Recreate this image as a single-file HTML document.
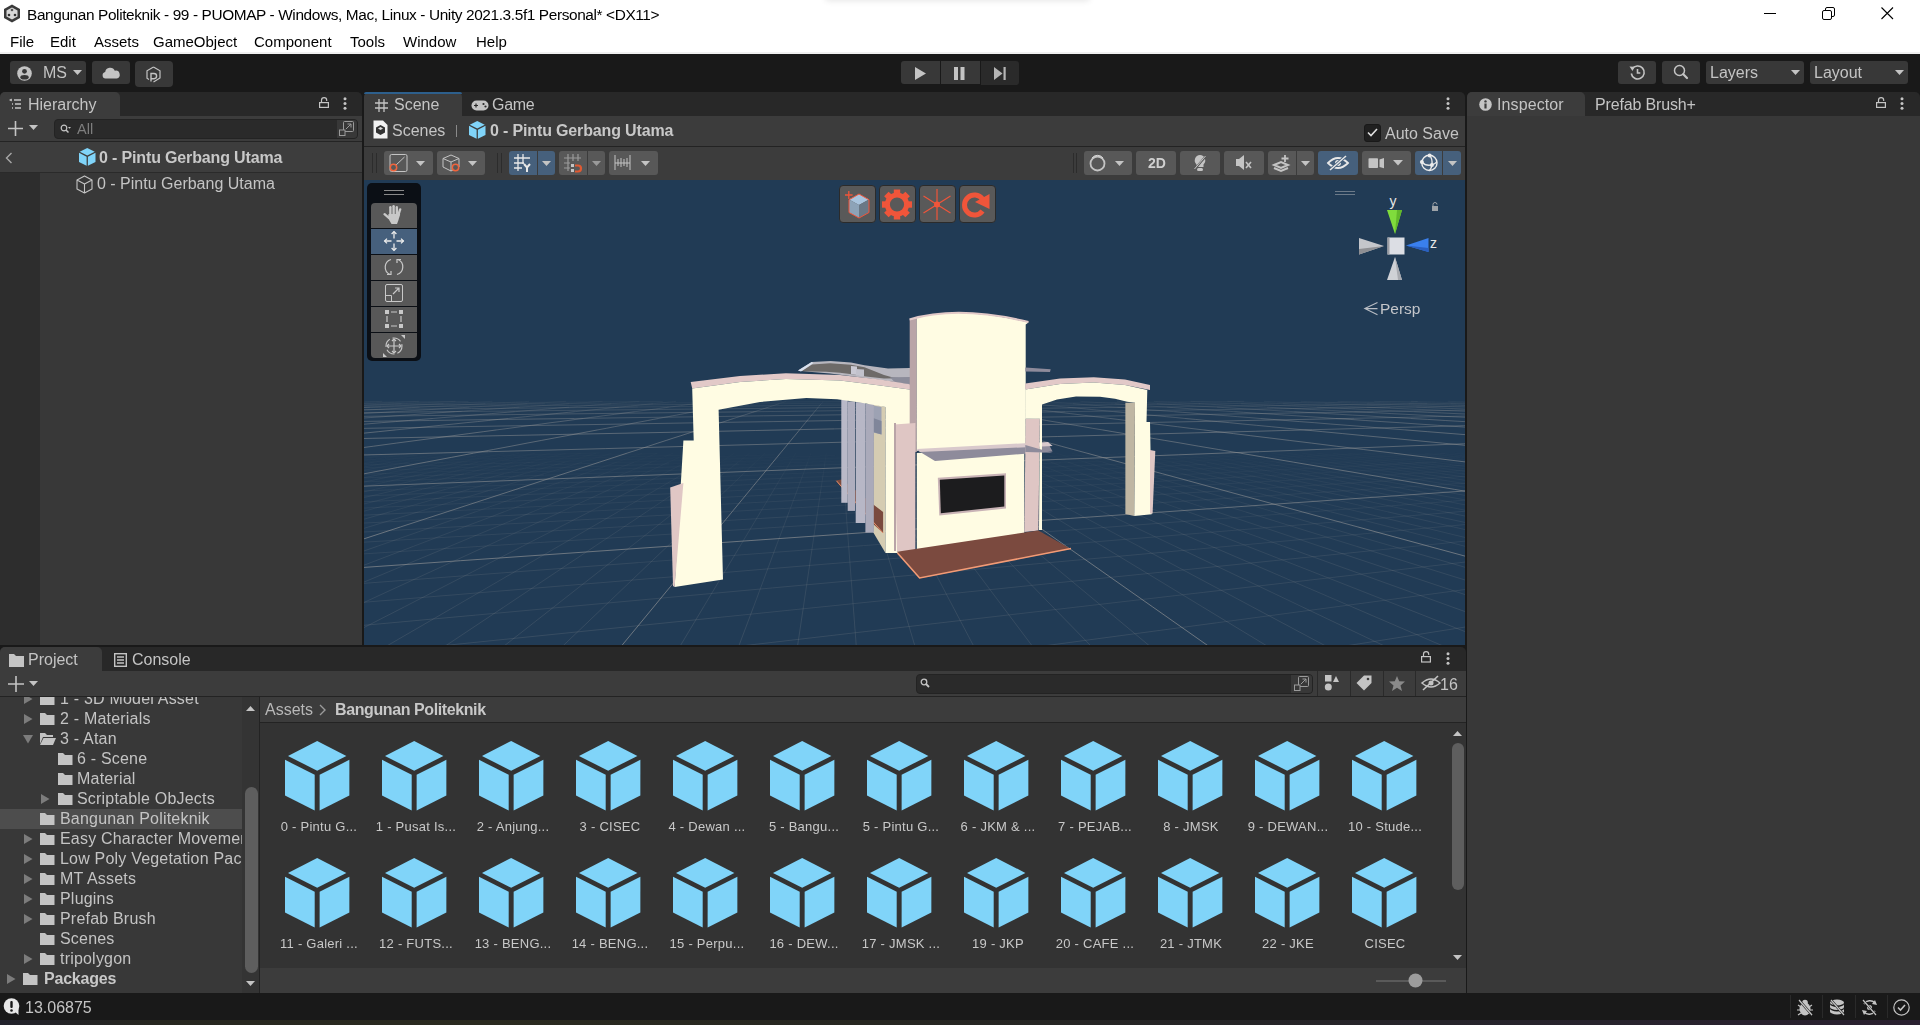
<!DOCTYPE html>
<html><head><meta charset="utf-8">
<style>
*{margin:0;padding:0;box-sizing:border-box}
html,body{width:1920px;height:1025px;overflow:hidden;background:#191919;font-family:"Liberation Sans",sans-serif;}
.a{position:absolute}
.t{position:absolute;white-space:nowrap;will-change:transform}
svg{position:absolute;overflow:visible}
.mj{stroke-opacity:0.55}
</style></head><body>

<div class="a" style="left:0.0px;top:0.0px;width:1920.0px;height:52.0px;background:#ffffff;"></div>
<div class="a" style="left:0.0px;top:52.0px;width:1920.0px;height:2.0px;background:#f0f0f0;"></div>
<div class="a" style="left:825.0px;top:-8.0px;width:265.0px;height:8.0px;background:#fff;box-shadow:0 1px 6px rgba(0,0,0,0.10);border-radius:4px"></div>
<svg class="a" style="left:3.0px;top:4.0px;" width="18" height="19" viewBox="0 0 18 19"><polygon points="9,0.5 17,5 17,14 9,18.5 1,14 1,5" fill="#3a3a3a"/><polygon points="9,3.5 14.5,6.5 14.5,12.5 9,15.5 3.5,12.5 3.5,6.5" fill="#d8d8d8"/><circle cx="9" cy="6" r="1.3" fill="#555"/><circle cx="6" cy="11" r="1.3" fill="#333"/><circle cx="12" cy="11" r="1.3" fill="#333"/></svg>
<div class="t" style="left:27.0px;top:7.0px;font-size:15.40px;line-height:15.40px;color:#000;font-weight:400;letter-spacing:-0.38px;">Bangunan Politeknik - 99 - PUOMAP - Windows, Mac, Linux - Unity 2021.3.5f1 Personal* &lt;DX11&gt;</div>
<div class="t" style="left:9.5px;top:34.3px;font-size:15.00px;line-height:15.00px;color:#000;font-weight:400;letter-spacing:0.00px;">File</div>
<div class="t" style="left:50.0px;top:34.3px;font-size:15.00px;line-height:15.00px;color:#000;font-weight:400;letter-spacing:0.00px;">Edit</div>
<div class="t" style="left:94.0px;top:34.3px;font-size:15.00px;line-height:15.00px;color:#000;font-weight:400;letter-spacing:0.00px;">Assets</div>
<div class="t" style="left:153.0px;top:34.3px;font-size:15.00px;line-height:15.00px;color:#000;font-weight:400;letter-spacing:0.00px;">GameObject</div>
<div class="t" style="left:254.0px;top:34.3px;font-size:15.00px;line-height:15.00px;color:#000;font-weight:400;letter-spacing:0.00px;">Component</div>
<div class="t" style="left:350.0px;top:34.3px;font-size:15.00px;line-height:15.00px;color:#000;font-weight:400;letter-spacing:0.00px;">Tools</div>
<div class="t" style="left:403.0px;top:34.3px;font-size:15.00px;line-height:15.00px;color:#000;font-weight:400;letter-spacing:0.00px;">Window</div>
<div class="t" style="left:476.0px;top:34.3px;font-size:15.00px;line-height:15.00px;color:#000;font-weight:400;letter-spacing:0.00px;">Help</div>
<div class="a" style="left:1764.0px;top:13.0px;width:12.0px;height:1.0px;background:#000;"></div>
<svg class="a" style="left:1822.0px;top:7.0px;" width="14" height="14" viewBox="0 0 14 14"><rect x="0.5" y="3.5" width="9" height="9" rx="1.5" fill="none" stroke="#000" stroke-width="1"/><path d="M3.5,3.5 V2 a1.5,1.5 0 0 1 1.5,-1.5 H11 a1.5,1.5 0 0 1 1.5,1.5 V8 a1.5,1.5 0 0 1 -1.5,1.5 H9.5" fill="none" stroke="#000" stroke-width="1"/></svg>
<svg class="a" style="left:1881.0px;top:7.0px;" width="13" height="13" viewBox="0 0 13 13"><path d="M0.5,0.5 L12,12 M12,0.5 L0.5,12" stroke="#000" stroke-width="1.1"/></svg>
<div class="a" style="left:10.0px;top:61.0px;width:76.0px;height:23.0px;background:#383838;border-radius:3px"></div>
<svg class="a" style="left:17.0px;top:66.0px;" width="15" height="15" viewBox="0 0 15 15"><circle cx="7.5" cy="7.5" r="7.3" fill="#c4c4c4"/><circle cx="7.5" cy="5.3" r="2.4" fill="#383838"/><ellipse cx="7.5" cy="11.2" rx="4.2" ry="2.3" fill="#383838"/></svg>
<div class="t" style="left:42.5px;top:65.1px;font-size:16.00px;line-height:16.00px;color:#c4c4c4;font-weight:400;letter-spacing:0.00px;">MS</div>
<svg class="a" style="left:73.0px;top:70.0px;" width="9" height="5" viewBox="0 0 9 5"><polygon points="0,0 9.0,0 4.5,5.0" fill="#c4c4c4"/></svg>
<div class="a" style="left:92.0px;top:61.0px;width:38.0px;height:23.0px;background:#383838;border-radius:3px"></div>
<svg class="a" style="left:102.0px;top:67.0px;" width="18" height="12" viewBox="0 0 18 12"><path d="M3.5,11.5 a3.3,3.3 0 0 1 -0.3,-6.5 a5,5 0 0 1 9.6,-1.2 a3.5,3.5 0 0 1 1.9,7.7 z" fill="#c4c4c4"/></svg>
<div class="a" style="left:135.0px;top:61.0px;width:38.0px;height:26.0px;background:#383838;border-radius:4px"></div>
<svg class="a" style="left:145.0px;top:66.0px;" width="17" height="17" viewBox="0 0 17 17"><path d="M8.5,1 L15,4.8 V12 L8.5,16 M8.5,1 L2,4.8 V12.2 L4,13.5" fill="none" stroke="#c4c4c4" stroke-width="1.2"/><path d="M6,15.5 V7.5 h3 a2.6,2.6 0 0 1 0,5.2 H6" fill="none" stroke="#c4c4c4" stroke-width="1.4"/></svg>
<div class="a" style="left:901.0px;top:61.0px;width:39.0px;height:23.0px;background:#383838;border-radius:3px 0 0 3px"></div>
<div class="a" style="left:941.0px;top:61.0px;width:39.0px;height:23.0px;background:#383838;"></div>
<div class="a" style="left:981.0px;top:61.0px;width:38.0px;height:24.0px;background:#2a2a2a;border-radius:0 3px 3px 0"></div>
<svg class="a" style="left:915.0px;top:67.0px;" width="11" height="13" viewBox="0 0 11 13"><polygon points="0,0 11,6.5 0,13" fill="#c4c4c4"/></svg>
<svg class="a" style="left:954.0px;top:67.0px;" width="11" height="13" viewBox="0 0 11 13"><rect x="0" y="0" width="4" height="13" fill="#c4c4c4"/><rect x="6.5" y="0" width="4" height="13" fill="#c4c4c4"/></svg>
<svg class="a" style="left:994.0px;top:67.0px;" width="12" height="13" viewBox="0 0 12 13"><polygon points="0,0 8.5,6.5 0,13" fill="#b4b4b4"/><rect x="9.5" y="0" width="2.2" height="13" fill="#b4b4b4"/></svg>
<div class="a" style="left:1618.0px;top:61.0px;width:38.0px;height:23.0px;background:#383838;border-radius:3px"></div>
<svg class="a" style="left:1629.0px;top:64.0px;" width="17" height="17" viewBox="0 0 17 17"><path d="M3.2,5 A6.5,6.5 0 1 1 2.3,9.5" fill="none" stroke="#c4c4c4" stroke-width="1.6"/><polygon points="0.5,2.5 5.5,2.8 3.5,7" fill="#c4c4c4"/><path d="M8.5,5 V9 H11.3" fill="none" stroke="#c4c4c4" stroke-width="1.6"/></svg>
<div class="a" style="left:1662.0px;top:61.0px;width:38.0px;height:23.0px;background:#383838;border-radius:3px"></div>
<svg class="a" style="left:1673.0px;top:64.0px;" width="16" height="16" viewBox="0 0 16 16"><circle cx="6.5" cy="6.5" r="5" fill="none" stroke="#c4c4c4" stroke-width="1.5"/><path d="M10.3,10.3 L14,14" stroke="#c4c4c4" stroke-width="2.2" stroke-linecap="round"/></svg>
<div class="a" style="left:1706.0px;top:61.0px;width:98.0px;height:23.0px;background:#383838;border-radius:3px"></div>
<div class="t" style="left:1710.0px;top:65.0px;font-size:16.00px;line-height:16.00px;color:#c4c4c4;font-weight:400;letter-spacing:0.00px;">Layers</div>
<svg class="a" style="left:1790.5px;top:70.0px;" width="9" height="5" viewBox="0 0 9 5"><polygon points="0,0 9.0,0 4.5,5.0" fill="#c4c4c4"/></svg>
<div class="a" style="left:1810.0px;top:61.0px;width:98.0px;height:23.0px;background:#383838;border-radius:3px"></div>
<div class="t" style="left:1814.0px;top:65.0px;font-size:16.00px;line-height:16.00px;color:#c4c4c4;font-weight:400;letter-spacing:0.00px;">Layout</div>
<svg class="a" style="left:1894.5px;top:70.0px;" width="9" height="5" viewBox="0 0 9 5"><polygon points="0,0 9.0,0 4.5,5.0" fill="#c4c4c4"/></svg>
<div class="a" style="left:0.0px;top:92.0px;width:362.0px;height:24.0px;background:#282828;border-radius:5px 5px 0 0"></div>
<div class="a" style="left:0.0px;top:92.0px;width:120.0px;height:25.0px;background:#3c3c3c;border-radius:5px 5px 0 0"></div>
<div class="a" style="left:0.0px;top:116.0px;width:362.0px;height:25.0px;background:#3c3c3c;"></div>
<div class="a" style="left:0.0px;top:141.0px;width:362.0px;height:1.0px;background:#242424;"></div>
<div class="a" style="left:0.0px;top:142.0px;width:362.0px;height:30.0px;background:#3d3d3d;"></div>
<div class="a" style="left:0.0px;top:172.0px;width:362.0px;height:1.0px;background:#2a2a2a;"></div>
<div class="a" style="left:0.0px;top:173.0px;width:362.0px;height:472.0px;background:#383838;"></div>
<div class="a" style="left:0.0px;top:173.0px;width:40.0px;height:472.0px;background:#2d2d2d;"></div>
<svg class="a" style="left:9.0px;top:99.0px;" width="14" height="11" viewBox="0 0 14 11"><path d="M2,1 h1 M5,1 H12 M3,5 h1 M6,5 H12 M3,9 h1 M6,9 H12" stroke="#c4c4c4" stroke-width="1.3"/><polygon points="0,1 2.5,-0.5 2.5,2.5" fill="#c4c4c4"/></svg>
<div class="t" style="left:27.5px;top:96.5px;font-size:16.00px;line-height:16.00px;color:#c4c4c4;font-weight:400;letter-spacing:0.00px;">Hierarchy</div>
<svg class="a" style="left:319.0px;top:97.0px;" width="10" height="11" viewBox="0 0 10 11"><path d="M2.5,5 V3.2 a2.6,2.6 0 0 1 5.2,0 V4" fill="none" stroke="#c4c4c4" stroke-width="1.2"/><rect x="0.6" y="5.6" width="8.8" height="4.8" fill="none" stroke="#c4c4c4" stroke-width="1.2"/></svg>
<svg class="a" style="left:343.0px;top:97.0px;" width="4" height="13" viewBox="0 0 4 13"><circle cx="2" cy="1.8" r="1.5" fill="#c4c4c4"/><circle cx="2" cy="6.5" r="1.5" fill="#c4c4c4"/><circle cx="2" cy="11.2" r="1.5" fill="#c4c4c4"/></svg>
<svg class="a" style="left:8.0px;top:121.0px;" width="15" height="15" viewBox="0 0 15 15"><path d="M7.5,0 V15 M0,7.5 H15" stroke="#c4c4c4" stroke-width="1.6"/></svg>
<svg class="a" style="left:29.0px;top:125.0px;" width="9" height="5" viewBox="0 0 9 5"><polygon points="0,0 9.0,0 4.5,5.0" fill="#c4c4c4"/></svg>
<div class="a" style="left:54.0px;top:119.0px;width:304.0px;height:20.0px;background:#2a2a2a;border-radius:4px;border:1px solid #232323"></div>
<div class="a" style="left:337.0px;top:120.0px;width:20.0px;height:18.0px;background:#383838;border-radius:0 3px 3px 0"></div>
<svg class="a" style="left:60.0px;top:124.0px;" width="12" height="10" viewBox="0 0 12 10"><circle cx="4" cy="4" r="2.8" fill="none" stroke="#c4c4c4" stroke-width="1.2"/><path d="M6,6 L8.5,8.5" stroke="#c4c4c4" stroke-width="1.5"/><polygon points="8,3 11,3 9.5,4.8" fill="#c4c4c4"/></svg>
<div class="t" style="left:76.5px;top:121.7px;font-size:14.50px;line-height:14.50px;color:#7e7e7e;font-weight:400;letter-spacing:0.00px;">All</div>
<svg class="a" style="left:339.0px;top:121.0px;" width="15" height="15" viewBox="0 0 15 15"><rect x="4.5" y="0.5" width="10" height="10" rx="1" fill="none" stroke="#9a9a9a"/><rect x="0.5" y="9" width="5.5" height="5.5" fill="#383838" stroke="#9a9a9a"/><path d="M7,8 L12,3 M8.5,3 H12 V6.5" fill="none" stroke="#9a9a9a" stroke-width="1"/></svg>
<svg class="a" style="left:5.0px;top:152.0px;" width="8" height="12" viewBox="0 0 8 12"><path d="M6.5,1 L1.5,6 L6.5,11" fill="none" stroke="#a8a8a8" stroke-width="1.4"/></svg>
<svg class="a" style="left:79.0px;top:148.0px;" width="17" height="18" viewBox="0 0 17 18"><g transform="scale(0.2538)"><polygon points="32.5,0 62,15 32.5,30 3,15" fill="#80d4f9"/><polygon points="0,19 30,34 30,70 0,55" fill="#80d4f9"/><polygon points="35,34 65,19 65,55 35,70" fill="#80d4f9"/></g></svg>
<div class="t" style="left:99.0px;top:149.5px;font-size:16.00px;line-height:16.00px;color:#c8c8c8;font-weight:700;letter-spacing:-0.15px;">0 - Pintu Gerbang Utama</div>
<svg class="a" style="left:76.0px;top:175.0px;" width="17" height="19" viewBox="0 0 17 19"><path d="M8.5,1 L16,5 V14 L8.5,18 L1,14 V5 Z M1,5 L8.5,9 L16,5 M8.5,9 V18" fill="none" stroke="#c4c4c4" stroke-width="1.1" stroke-linejoin="round"/></svg>
<div class="t" style="left:96.8px;top:175.5px;font-size:16.00px;line-height:16.00px;color:#c4c4c4;font-weight:400;letter-spacing:0.00px;">0 - Pintu Gerbang Utama</div>
<div class="a" style="left:364.0px;top:92.0px;width:1101.0px;height:24.0px;background:#282828;border-radius:5px 5px 0 0"></div>
<div class="a" style="left:364.0px;top:92.0px;width:98.0px;height:25.0px;background:#3c3c3c;border-radius:5px 5px 0 0"></div>
<div class="a" style="left:364.0px;top:92.0px;width:98.0px;height:2.0px;background:#2d5f8c;border-radius:3px 3px 0 0"></div>
<svg class="a" style="left:375.0px;top:99.0px;" width="13" height="13" viewBox="0 0 13 13"><path d="M4,0 V13 M9,0 V13 M0,4 H13 M0,9 H13" stroke="#c4c4c4" stroke-width="1.3"/></svg>
<div class="t" style="left:393.8px;top:96.5px;font-size:16.00px;line-height:16.00px;color:#c4c4c4;font-weight:400;letter-spacing:0.00px;">Scene</div>
<svg class="a" style="left:471.0px;top:100.0px;" width="18" height="11" viewBox="0 0 18 11"><rect x="0.5" y="0.5" width="17" height="10" rx="5" fill="#c4c4c4"/><path d="M3,5.5 H7 M5,3.5 V7.5" stroke="#282828" stroke-width="1.2"/><circle cx="12.5" cy="4" r="1.1" fill="#282828"/><circle cx="14.5" cy="6.5" r="1.1" fill="#282828"/></svg>
<div class="t" style="left:492.0px;top:96.5px;font-size:16.00px;line-height:16.00px;color:#c4c4c4;font-weight:400;letter-spacing:-0.30px;">Game</div>
<svg class="a" style="left:1446.0px;top:97.0px;" width="4" height="13" viewBox="0 0 4 13"><circle cx="2" cy="1.8" r="1.5" fill="#c4c4c4"/><circle cx="2" cy="6.5" r="1.5" fill="#c4c4c4"/><circle cx="2" cy="11.2" r="1.5" fill="#c4c4c4"/></svg>
<div class="a" style="left:364.0px;top:116.0px;width:1101.0px;height:30.0px;background:#3c3c3c;"></div>
<div class="a" style="left:364.0px;top:146.0px;width:1101.0px;height:1.0px;background:#232323;"></div>
<div class="a" style="left:364.0px;top:147.0px;width:1101.0px;height:33.0px;background:#3c3c3c;"></div>
<svg class="a" style="left:373.0px;top:120.0px;" width="15" height="19" viewBox="0 0 15 19"><path d="M0.5,0.5 H10 L14.5,5 V18.5 H0.5 Z" fill="#f2f2f2"/><polygon points="7.5,5 12,7.5 12,12.5 7.5,15 3,12.5 3,7.5" fill="#333"/><polygon points="7.5,7 10,8.5 7.5,10 5,8.5" fill="#ddd"/></svg>
<div class="t" style="left:391.5px;top:122.5px;font-size:16.00px;line-height:16.00px;color:#c4c4c4;font-weight:400;letter-spacing:0.00px;">Scenes</div>
<div class="a" style="left:455.5px;top:125.0px;width:1.0px;height:12.0px;background:#8a8a8a;"></div>
<svg class="a" style="left:469.0px;top:121.0px;" width="17" height="18" viewBox="0 0 17 18"><g transform="scale(0.2538)"><polygon points="32.5,0 62,15 32.5,30 3,15" fill="#80d4f9"/><polygon points="0,19 30,34 30,70 0,55" fill="#80d4f9"/><polygon points="35,34 65,19 65,55 35,70" fill="#80d4f9"/></g></svg>
<div class="t" style="left:489.5px;top:122.5px;font-size:16.00px;line-height:16.00px;color:#c8c8c8;font-weight:700;letter-spacing:-0.15px;">0 - Pintu Gerbang Utama</div>
<div class="a" style="left:1364.0px;top:124.0px;width:17.0px;height:18.0px;background:#202020;border-radius:3px;border:1px solid #191919"></div>
<svg class="a" style="left:1367.0px;top:128.0px;" width="11" height="9" viewBox="0 0 11 9"><path d="M1,4.5 L4,7.5 L10,1" fill="none" stroke="#e0e0e0" stroke-width="1.6"/></svg>
<div class="t" style="left:1384.5px;top:125.8px;font-size:16.00px;line-height:16.00px;color:#c4c4c4;font-weight:400;letter-spacing:0.00px;">Auto Save</div>
<div class="a" style="left:372.0px;top:153.0px;width:1.0px;height:20.0px;background:#2c2c2c;"></div>
<div class="a" style="left:376.0px;top:153.0px;width:1.0px;height:20.0px;background:#2c2c2c;"></div>
<div class="a" style="left:384.0px;top:151.0px;width:49.0px;height:24.0px;background:#585858;border-radius:3px"></div>
<svg class="a" style="left:389.0px;top:154.0px;" width="19" height="18" viewBox="0 0 19 18"><rect x="1" y="0.5" width="17" height="17" rx="1.5" fill="none" stroke="#c4c4c4" stroke-width="1"/><path d="M6,12 L15.5,3" stroke="#c4c4c4" stroke-width="1"/><circle cx="4.5" cy="13.5" r="3.2" fill="#585858" stroke="#f0643c" stroke-width="1.5"/></svg>
<svg class="a" style="left:415.5px;top:160.5px;" width="9" height="5" viewBox="0 0 9 5"><polygon points="0,0 9.0,0 4.5,5.0" fill="#c4c4c4"/></svg>
<div class="a" style="left:437.0px;top:151.0px;width:48.0px;height:24.0px;background:#585858;border-radius:3px"></div>
<svg class="a" style="left:442.0px;top:154.0px;" width="19" height="18" viewBox="0 0 19 18"><path d="M9,1 L17,4.5 V13 L9,17 L1,13 V4.5 Z M1,4.5 L9,8 L17,4.5 M9,8 V17" fill="none" stroke="#c4c4c4" stroke-width="1"/><circle cx="13.5" cy="13.5" r="3.2" fill="#585858" stroke="#f0643c" stroke-width="1.5"/></svg>
<svg class="a" style="left:468.0px;top:160.5px;" width="9" height="5" viewBox="0 0 9 5"><polygon points="0,0 9.0,0 4.5,5.0" fill="#c4c4c4"/></svg>
<div class="a" style="left:497.0px;top:153.0px;width:1.0px;height:20.0px;background:#2c2c2c;"></div>
<div class="a" style="left:501.0px;top:153.0px;width:1.0px;height:20.0px;background:#2c2c2c;"></div>
<div class="a" style="left:509.0px;top:151.0px;width:28.0px;height:24.0px;background:#46607c;border-radius:3px 0 0 3px"></div>
<div class="a" style="left:538.0px;top:151.0px;width:17.0px;height:24.0px;background:#46607c;border-radius:0 3px 3px 0"></div>
<svg class="a" style="left:514.0px;top:154.0px;" width="18" height="18" viewBox="0 0 18 18"><path d="M4,0 V17 M9,0 V10 M0,4 H16 M0,9 H10 M0,14 H8" stroke="#e8e8e8" stroke-width="1.3"/><path d="M10,10 L13,13.5 L16,10 M13,13.5 V18" fill="none" stroke="#e8e8e8" stroke-width="2"/></svg>
<svg class="a" style="left:542.0px;top:160.5px;" width="9" height="5" viewBox="0 0 9 5"><polygon points="0,0 9.0,0 4.5,5.0" fill="#c4c4c4"/></svg>
<div class="a" style="left:559.0px;top:151.0px;width:28.0px;height:24.0px;background:#585858;border-radius:3px 0 0 3px"></div>
<div class="a" style="left:588.0px;top:151.0px;width:17.0px;height:24.0px;background:#585858;border-radius:0 3px 3px 0"></div>
<svg class="a" style="left:564.0px;top:154.0px;" width="18" height="18" viewBox="0 0 18 18"><path d="M4,0 V17 M9,0 V7 M14,0 V7 M0,4 H17 M0,9 H6 M0,14 H6" stroke="#9a9a9a" stroke-width="1.2"/><rect x="7" y="10" width="3" height="3" fill="#c4c4c4"/><rect x="7" y="15" width="3" height="3" fill="#c4c4c4"/><path d="M11,11.5 H14 a3,3 0 0 1 0,6 H11" fill="none" stroke="#e05a32" stroke-width="2.2"/></svg>
<svg class="a" style="left:592.0px;top:160.5px;" width="9" height="5" viewBox="0 0 9 5"><polygon points="0,0 9.0,0 4.5,5.0" fill="#9a9a9a"/></svg>
<div class="a" style="left:609.0px;top:151.0px;width:49.0px;height:24.0px;background:#585858;border-radius:3px"></div>
<svg class="a" style="left:614.0px;top:154.0px;" width="18" height="16" viewBox="0 0 18 16"><path d="M1,1 V16 M16,1 V16 M4,5 V12 M7,4 V13 M10,5 V12 M13,4 V13 M1,9 H16" stroke="#c4c4c4" stroke-width="1"/></svg>
<svg class="a" style="left:640.5px;top:160.5px;" width="9" height="5" viewBox="0 0 9 5"><polygon points="0,0 9.0,0 4.5,5.0" fill="#c4c4c4"/></svg>
<div class="a" style="left:1073.0px;top:153.0px;width:1.0px;height:20.0px;background:#2c2c2c;"></div>
<div class="a" style="left:1076.0px;top:153.0px;width:1.0px;height:20.0px;background:#2c2c2c;"></div>
<div class="a" style="left:1084.0px;top:151.0px;width:48.0px;height:24.0px;background:#585858;border-radius:3px"></div>
<svg class="a" style="left:1089.0px;top:155.0px;" width="17" height="17" viewBox="0 0 17 17"><circle cx="8.5" cy="8.5" r="7" fill="none" stroke="#c4c4c4" stroke-width="1.8"/><path d="M3,3 a7,7 0 0 1 11,0" fill="none" stroke="#d8d8d8" stroke-width="1"/></svg>
<svg class="a" style="left:1115.0px;top:160.5px;" width="9" height="5" viewBox="0 0 9 5"><polygon points="0,0 9.0,0 4.5,5.0" fill="#c4c4c4"/></svg>
<div class="a" style="left:1136.0px;top:151.0px;width:40.0px;height:24.0px;background:#585858;border-radius:3px"></div>
<div class="t" style="left:1147.5px;top:155.9px;font-size:14.00px;line-height:14.00px;color:#d0d0d0;font-weight:700;letter-spacing:0.00px;">2D</div>
<div class="a" style="left:1180.0px;top:151.0px;width:40.0px;height:24.0px;background:#585858;border-radius:3px"></div>
<svg class="a" style="left:1193.0px;top:154.0px;" width="14" height="18" viewBox="0 0 14 18"><path d="M7,1 a5.5,5.5 0 0 1 3.5,9.5 V13 H3.5 V10.5 A5.5,5.5 0 0 1 7,1 Z" fill="#c4c4c4"/><rect x="4" y="14" width="6" height="3" rx="1.5" fill="#c4c4c4"/><path d="M1,16 L13,2" stroke="#585858" stroke-width="2"/><path d="M1.5,15 L12.5,2" stroke="#c4c4c4" stroke-width="1"/></svg>
<div class="a" style="left:1224.0px;top:151.0px;width:40.0px;height:24.0px;background:#585858;border-radius:3px"></div>
<svg class="a" style="left:1236.0px;top:155.0px;" width="17" height="15" viewBox="0 0 17 15"><rect x="0" y="4" width="3" height="7" fill="#c4c4c4"/><polygon points="3,4 8,0 8,15 3,11" fill="#c4c4c4"/><path d="M10,7 L15,13 M15,7 L10,13" stroke="#c4c4c4" stroke-width="1.6"/></svg>
<div class="a" style="left:1268.0px;top:151.0px;width:28.0px;height:24.0px;background:#585858;border-radius:3px 0 0 3px"></div>
<div class="a" style="left:1297.0px;top:151.0px;width:17.0px;height:24.0px;background:#585858;border-radius:0 3px 3px 0"></div>
<svg class="a" style="left:1272.0px;top:154.0px;" width="20" height="18" viewBox="0 0 20 18"><path d="M2,11 L9,8 L16,11 L9,14 Z M2,14 L9,17 L16,14" fill="none" stroke="#c4c4c4" stroke-width="2"/><path d="M13,1 V8 M9.5,4.5 H16.5" stroke="#c4c4c4" stroke-width="1.8"/></svg>
<svg class="a" style="left:1301.0px;top:160.5px;" width="9" height="5" viewBox="0 0 9 5"><polygon points="0,0 9.0,0 4.5,5.0" fill="#c4c4c4"/></svg>
<div class="a" style="left:1318.0px;top:151.0px;width:40.0px;height:24.0px;background:#46607c;border-radius:3px"></div>
<svg class="a" style="left:1327.0px;top:155.0px;" width="22" height="16" viewBox="0 0 22 16"><path d="M1,8 Q11,-2 21,8 Q11,18 1,8 Z" fill="none" stroke="#e8e8e8" stroke-width="1.8"/><circle cx="11" cy="8" r="3" fill="#e8e8e8"/><path d="M3,15 L19,1" stroke="#46607c" stroke-width="3"/><path d="M3,15 L19,1" stroke="#e8e8e8" stroke-width="1.5"/></svg>
<div class="a" style="left:1362.0px;top:151.0px;width:49.0px;height:24.0px;background:#585858;border-radius:3px"></div>
<svg class="a" style="left:1368.0px;top:158.0px;" width="17" height="11" viewBox="0 0 17 11"><rect x="0.5" y="0.3" width="9.5" height="9.7" rx="0.8" fill="#c4c4c4"/><polygon points="11.5,1.5 16,0 16,10.3 11.5,9" fill="#c4c4c4"/></svg>
<svg class="a" style="left:1392.8px;top:160.2px;" width="10" height="6" viewBox="0 0 10 6"><polygon points="0,0 10.0,0 5.0,5.5" fill="#c4c4c4"/></svg>
<div class="a" style="left:1415.0px;top:151.0px;width:27.0px;height:24.0px;background:#46607c;border-radius:3px 0 0 3px"></div>
<div class="a" style="left:1443.0px;top:151.0px;width:18.0px;height:24.0px;background:#46607c;border-radius:0 3px 3px 0"></div>
<svg class="a" style="left:1420.0px;top:153.0px;" width="19" height="19" viewBox="0 0 19 19"><g fill="none" stroke="#ececec" stroke-width="1.4"><circle cx="9.4" cy="9.9" r="7.6"/><path d="M1.8,9 Q6,13.5 11.9,11.9 M9.6,2.4 Q12.8,6 11.9,11.9 M11.9,11.9 Q11.5,15.5 9.5,17.5 M11.9,11.9 Q15,11 17,8.6"/></g><circle cx="9.6" cy="2.6" r="2" fill="#ececec"/><circle cx="1.9" cy="9" r="2" fill="#ececec"/><circle cx="11.9" cy="11.9" r="2" fill="#ececec"/></svg>
<svg class="a" style="left:1447.5px;top:160.5px;" width="9" height="5" viewBox="0 0 9 5"><polygon points="0,0 9.0,0 4.5,5.0" fill="#c4c4c4"/></svg>
<div class="a" style="left:364.0px;top:180.0px;width:1101.0px;height:465.0px;background:#213b55;"></div>
<svg class="a" style="left:364px;top:180px;overflow:hidden" width="1101" height="465" viewBox="0 0 1101 465">
<g fill="none" stroke="#9a9a9a" stroke-width="1">
<path d="M-26.7 277.4L2.2 273.2M-10.4 277.4L17.5 273.2M-24.5 282.1L5.9 277.4M5.9 277.4L32.8 273.2M-7.2 282.1L22.2 277.4M22.2 277.4L48.2 273.2M10.1 282.1L38.5 277.4M38.5 277.4L63.5 273.2M27.5 282.1L54.7 277.4M54.7 277.4L78.9 273.2M44.8 282.1L71.0 277.4M71.0 277.4L94.2 273.2M79.5 282.1L103.6 277.4M103.6 277.4L124.9 273.2M96.8 282.1L119.9 277.4M119.9 277.4L140.2 273.2M114.2 282.1L136.1 277.4M136.1 277.4L155.6 273.2M131.5 282.1L152.4 277.4M152.4 277.4L170.9 273.2M148.9 282.1L168.7 277.4M168.7 277.4L186.2 273.2M166.2 282.1L185.0 277.4M185.0 277.4L201.6 273.2M183.6 282.1L201.3 277.4M201.3 277.4L216.9 273.2M200.9 282.1L217.5 277.4M217.5 277.4L232.3 273.2M218.2 282.1L233.8 277.4M233.8 277.4L247.6 273.2M252.9 282.1L266.4 277.4M266.4 277.4L278.3 273.2M270.3 282.1L282.7 277.4M282.7 277.4L293.6 273.2M287.6 282.1L298.9 277.4M298.9 277.4L309.0 273.2M304.9 282.1L315.2 277.4M315.2 277.4L324.3 273.2M322.3 282.1L331.5 277.4M331.5 277.4L339.6 273.2M339.6 282.1L347.8 277.4M347.8 277.4L355.0 273.2M357.0 282.1L364.0 277.4M364.0 277.4L370.3 273.2M374.3 282.1L380.3 277.4M380.3 277.4L385.6 273.2M391.6 282.1L396.6 277.4M396.6 277.4L401.0 273.2M426.3 282.1L429.2 277.4M429.2 277.4L431.7 273.2M443.7 282.1L445.4 277.4M445.4 277.4L447.0 273.2M461.0 282.1L461.7 277.4M461.7 277.4L462.3 273.2M478.4 282.1L478.0 277.4M478.0 277.4L477.7 273.2M495.7 282.1L494.3 277.4M494.3 277.4L493.0 273.2M513.0 282.1L510.6 277.4M510.6 277.4L508.4 273.2M530.4 282.1L526.8 277.4M526.8 277.4L523.7 273.2M547.7 282.1L543.1 277.4M543.1 277.4L539.0 273.2M565.1 282.1L559.4 277.4M559.4 277.4L554.4 273.2M599.7 282.1L592.0 277.4M592.0 277.4L585.1 273.2M617.1 282.1L608.2 277.4M608.2 277.4L600.4 273.2M634.4 282.1L624.5 277.4M624.5 277.4L615.7 273.2M651.8 282.1L640.8 277.4M640.8 277.4L631.1 273.2M669.1 282.1L657.1 277.4M657.1 277.4L646.4 273.2M686.5 282.1L673.4 277.4M673.4 277.4L661.8 273.2M703.8 282.1L689.6 277.4M689.6 277.4L677.1 273.2M721.1 282.1L705.9 277.4M705.9 277.4L692.4 273.2M738.5 282.1L722.2 277.4M722.2 277.4L707.8 273.2M773.2 282.1L754.7 277.4M754.7 277.4L738.5 273.2M790.5 282.1L771.0 277.4M771.0 277.4L753.8 273.2M807.8 282.1L787.3 277.4M787.3 277.4L769.1 273.2M825.2 282.1L803.6 277.4M803.6 277.4L784.5 273.2M842.5 282.1L819.9 277.4M819.9 277.4L799.8 273.2M859.9 282.1L836.1 277.4M836.1 277.4L815.2 273.2M877.2 282.1L852.4 277.4M852.4 277.4L830.5 273.2M894.6 282.1L868.7 277.4M868.7 277.4L845.8 273.2M911.9 282.1L885.0 277.4M885.0 277.4L861.2 273.2M946.6 282.1L917.5 277.4M917.5 277.4L891.9 273.2M963.9 282.1L933.8 277.4M933.8 277.4L907.2 273.2M981.3 282.1L950.1 277.4M950.1 277.4L922.5 273.2M998.6 282.1L966.4 277.4M966.4 277.4L937.9 273.2M1015.9 282.1L982.7 277.4M982.7 277.4L953.2 273.2M1033.3 282.1L998.9 277.4M998.9 277.4L968.6 273.2M1050.6 282.1L1015.2 277.4M1015.2 277.4L983.9 273.2M1068.0 282.1L1031.5 277.4M1031.5 277.4L999.2 273.2M1085.3 282.1L1047.8 277.4M1047.8 277.4L1014.6 273.2M1120.0 282.1L1080.3 277.4M1080.3 277.4L1045.2 273.2M1137.3 282.1L1096.6 277.4M1096.6 277.4L1060.6 273.2M1112.9 277.4L1075.9 273.2M1129.2 277.4L1091.3 273.2M1072.5 282.0L1145.1 278.4M916.5 285.2L1000.3 281.2M1000.3 281.2L1076.2 277.7M1076.2 277.7L1145.4 274.4M842.0 284.3L929.4 280.5M929.4 280.5L1008.7 276.9M1008.7 276.9L1080.9 273.7M769.0 283.6L860.0 279.7M860.0 279.7L942.6 276.2M942.6 276.2L1017.7 273.0M697.5 282.8L792.0 279.0M792.0 279.0L877.7 275.5M558.6 281.3L660.0 277.5M660.0 277.5L751.9 274.1M375.0 284.6L491.1 280.5M491.1 280.5L595.8 276.8M595.8 276.8L690.8 273.5M305.3 283.9L425.0 279.8M425.0 279.8L533.0 276.1M533.0 276.1L630.8 272.8M236.8 283.1L360.1 279.1M360.1 279.1L471.2 275.5M169.6 282.4L296.4 278.4M296.4 278.4L410.7 274.8M103.7 281.7L233.9 277.7M233.9 277.7L351.3 274.2M-110.0 285.3L38.9 281.0M38.9 281.0L172.5 277.1M172.5 277.1L292.9 273.5M-24.6 280.3L112.2 276.4M112.2 276.4L235.7 272.9M-87.0 279.6L53.1 275.8" stroke-opacity="0.026"/>
<path d="M-22.1 287.5L10.1 282.1M-3.6 287.5L27.5 282.1M-19.4 293.7L15.0 287.5M15.0 287.5L44.8 282.1M20.5 293.7L52.1 287.5M52.1 287.5L79.5 282.1M40.4 293.7L70.6 287.5M70.6 287.5L96.8 282.1M60.4 293.7L89.2 287.5M89.2 287.5L114.2 282.1M80.3 293.7L107.7 287.5M107.7 287.5L131.5 282.1M100.3 293.7L126.3 287.5M126.3 287.5L148.9 282.1M120.2 293.7L144.8 287.5M144.8 287.5L166.2 282.1M140.2 293.7L163.4 287.5M163.4 287.5L183.6 282.1M160.1 293.7L181.9 287.5M181.9 287.5L200.9 282.1M180.1 293.7L200.5 287.5M200.5 287.5L218.2 282.1M219.9 293.7L237.6 287.5M237.6 287.5L252.9 282.1M239.9 293.7L256.1 287.5M256.1 287.5L270.3 282.1M259.8 293.7L274.7 287.5M274.7 287.5L287.6 282.1M279.8 293.7L293.2 287.5M293.2 287.5L304.9 282.1M299.7 293.7L311.8 287.5M311.8 287.5L322.3 282.1M319.7 293.7L330.3 287.5M330.3 287.5L339.6 282.1M339.6 293.7L348.9 287.5M348.9 287.5L357.0 282.1M359.6 293.7L367.4 287.5M367.4 287.5L374.3 282.1M379.5 293.7L386.0 287.5M386.0 287.5L391.6 282.1M419.4 293.7L423.1 287.5M423.1 287.5L426.3 282.1M439.3 293.7L441.7 287.5M441.7 287.5L443.7 282.1M459.3 293.7L460.2 287.5M460.2 287.5L461.0 282.1M479.2 293.7L478.8 287.5M478.8 287.5L478.4 282.1M499.2 293.7L497.3 287.5M497.3 287.5L495.7 282.1M519.1 293.7L515.9 287.5M515.9 287.5L513.0 282.1M539.1 293.7L534.4 287.5M534.4 287.5L530.4 282.1M559.0 293.7L553.0 287.5M553.0 287.5L547.7 282.1M579.0 293.7L571.5 287.5M571.5 287.5L565.1 282.1M618.8 293.7L608.6 287.5M608.6 287.5L599.7 282.1M638.8 293.7L627.2 287.5M627.2 287.5L617.1 282.1M658.7 293.7L645.7 287.5M645.7 287.5L634.4 282.1M678.7 293.7L664.3 287.5M664.3 287.5L651.8 282.1M698.6 293.7L682.8 287.5M682.8 287.5L669.1 282.1M718.6 293.7L701.4 287.5M701.4 287.5L686.5 282.1M738.5 293.7L719.9 287.5M719.9 287.5L703.8 282.1M758.5 293.7L738.5 287.5M738.5 287.5L721.1 282.1M778.4 293.7L757.0 287.5M757.0 287.5L738.5 282.1M818.3 293.7L794.2 287.5M794.2 287.5L773.2 282.1M838.2 293.7L812.7 287.5M812.7 287.5L790.5 282.1M858.2 293.7L831.3 287.5M831.3 287.5L807.8 282.1M878.1 293.7L849.8 287.5M849.8 287.5L825.2 282.1M898.1 293.7L868.4 287.5M868.4 287.5L842.5 282.1M918.0 293.7L886.9 287.5M886.9 287.5L859.9 282.1M938.0 293.7L905.5 287.5M905.5 287.5L877.2 282.1M957.9 293.7L924.0 287.5M924.0 287.5L894.6 282.1M977.8 293.7L942.6 287.5M942.6 287.5L911.9 282.1M1017.7 293.7L979.7 287.5M979.7 287.5L946.6 282.1M1037.7 293.7L998.2 287.5M998.2 287.5L963.9 282.1M1057.6 293.7L1016.8 287.5M1016.8 287.5L981.3 282.1M1077.6 293.7L1035.3 287.5M1035.3 287.5L998.6 282.1M1097.5 293.7L1053.9 287.5M1053.9 287.5L1015.9 282.1M1117.5 293.7L1072.4 287.5M1072.4 287.5L1033.3 282.1M1137.4 293.7L1091.0 287.5M1091.0 287.5L1050.6 282.1M1109.5 287.5L1068.0 282.1M1128.1 287.5L1085.3 282.1M979.8 297.2L1069.2 292.2M1069.2 292.2L1149.3 287.7M891.5 296.2L985.6 291.3M985.6 291.3L1070.1 286.8M1070.1 286.8L1146.3 282.8M804.9 295.3L903.8 290.4M903.8 290.4L992.5 286.0M992.5 286.0L1072.5 282.0M720.1 294.4L823.6 289.5M823.6 289.5L916.5 285.2M637.0 293.5L745.1 288.7M745.1 288.7L842.0 284.3M429.4 297.9L555.6 292.6M555.6 292.6L668.1 287.8M668.1 287.8L769.0 283.6M344.7 297.0L475.8 291.7M475.8 291.7L592.7 287.0M592.7 287.0L697.5 282.8M180.2 295.2L320.8 290.0M320.8 290.0L446.2 285.4M446.2 285.4L558.6 281.3M100.4 294.3L245.6 289.2M245.6 289.2L375.0 284.6M22.0 293.5L171.8 288.4M171.8 288.4L305.3 283.9M-54.9 292.7L99.3 287.6M99.3 287.6L236.8 283.1M-130.3 291.8L28.3 286.8M28.3 286.8L169.6 282.4M-41.5 286.1L103.7 281.7" stroke-opacity="0.052"/>
<path d="M-16.2 300.9L20.5 293.7M-35.9 309.4L5.4 300.9M5.4 300.9L40.4 293.7M-12.4 309.4L26.9 300.9M26.9 300.9L60.4 293.7M11.1 309.4L48.5 300.9M48.5 300.9L80.3 293.7M34.5 309.4L70.1 300.9M70.1 300.9L100.3 293.7M58.0 309.4L91.6 300.9M91.6 300.9L120.2 293.7M81.5 309.4L113.2 300.9M113.2 300.9L140.2 293.7M104.9 309.4L134.8 300.9M134.8 300.9L160.1 293.7M128.4 309.4L156.3 300.9M156.3 300.9L180.1 293.7M175.3 309.4L199.5 300.9M199.5 300.9L219.9 293.7M198.8 309.4L221.0 300.9M221.0 300.9L239.9 293.7M222.3 309.4L242.6 300.9M242.6 300.9L259.8 293.7M245.7 309.4L264.1 300.9M264.1 300.9L279.8 293.7M269.2 309.4L285.7 300.9M285.7 300.9L299.7 293.7M292.7 309.4L307.3 300.9M307.3 300.9L319.7 293.7M316.1 309.4L328.8 300.9M328.8 300.9L339.6 293.7M339.6 309.4L350.4 300.9M350.4 300.9L359.6 293.7M363.1 309.4L372.0 300.9M372.0 300.9L379.5 293.7M410.0 309.4L415.1 300.9M415.1 300.9L419.4 293.7M433.5 309.4L436.6 300.9M436.6 300.9L439.3 293.7M456.9 309.4L458.2 300.9M458.2 300.9L459.3 293.7M480.4 309.4L479.8 300.9M479.8 300.9L479.2 293.7M503.9 309.4L501.3 300.9M501.3 300.9L499.2 293.7M527.3 309.4L522.9 300.9M522.9 300.9L519.1 293.7M550.8 309.4L544.5 300.9M544.5 300.9L539.1 293.7M574.3 309.4L566.0 300.9M566.0 300.9L559.0 293.7M597.7 309.4L587.6 300.9M587.6 300.9L579.0 293.7M644.7 309.4L630.7 300.9M630.7 300.9L618.8 293.7M668.2 309.4L652.3 300.9M652.3 300.9L638.8 293.7M691.6 309.4L673.8 300.9M673.8 300.9L658.7 293.7M715.1 309.4L695.4 300.9M695.4 300.9L678.7 293.7M738.6 309.4L717.0 300.9M717.0 300.9L698.6 293.7M762.0 309.4L738.5 300.9M738.5 300.9L718.6 293.7M785.5 309.4L760.1 300.9M760.1 300.9L738.5 293.7M809.0 309.4L781.7 300.9M781.7 300.9L758.5 293.7M832.4 309.4L803.2 300.9M803.2 300.9L778.4 293.7M879.4 309.4L846.3 300.9M846.3 300.9L818.3 293.7M902.8 309.4L867.9 300.9M867.9 300.9L838.2 293.7M926.3 309.4L889.5 300.9M889.5 300.9L858.2 293.7M949.8 309.4L911.0 300.9M911.0 300.9L878.1 293.7M973.2 309.4L932.6 300.9M932.6 300.9L898.1 293.7M996.7 309.4L954.2 300.9M954.2 300.9L918.0 293.7M1020.2 309.4L975.7 300.9M975.7 300.9L938.0 293.7M1043.6 309.4L997.3 300.9M997.3 300.9L957.9 293.7M1067.1 309.4L1018.8 300.9M1018.8 300.9L977.8 293.7M1114.0 309.4L1062.0 300.9M1062.0 300.9L1017.7 293.7M1137.5 309.4L1083.5 300.9M1083.5 300.9L1037.7 293.7M1105.1 300.9L1057.6 293.7M1126.7 300.9L1077.6 293.7M1148.2 300.9L1097.5 293.7M972.6 311.3L1073.2 304.9M1073.2 304.9L1162.3 299.2M868.4 310.2L975.4 303.8M975.4 303.8L1070.1 298.2M1070.1 298.2L1154.5 293.1M766.4 309.1L879.6 302.8M879.6 302.8L979.8 297.2M530.7 315.2L666.5 308.0M666.5 308.0L785.8 301.8M785.8 301.8L891.5 296.2M426.0 314.0L568.7 307.0M568.7 307.0L694.0 300.8M694.0 300.8L804.9 295.3M323.5 312.9L472.8 305.9M472.8 305.9L604.0 299.8M604.0 299.8L720.1 294.4M223.0 311.9L378.9 304.9M378.9 304.9L515.8 298.8M515.8 298.8L637.0 293.5M124.5 310.8L286.9 303.9M286.9 303.9L429.4 297.9M28.0 309.8L196.6 303.0M196.6 303.0L344.7 297.0M-159.5 307.7L21.4 301.1M21.4 301.1L180.2 295.2M-63.7 300.1L100.4 294.3M-147.2 299.2L22.0 293.5" stroke-opacity="0.079"/>
<path d="M-33.6 319.5L11.1 309.4M-7.9 319.5L34.5 309.4M-30.9 331.8L17.8 319.5M17.8 319.5L58.0 309.4M-2.4 331.8L43.6 319.5M43.6 319.5L81.5 309.4M26.1 331.8L69.3 319.5M69.3 319.5L104.9 309.4M54.6 331.8L95.1 319.5M95.1 319.5L128.4 309.4M111.6 331.8L146.5 319.5M146.5 319.5L175.3 309.4M140.1 331.8L172.3 319.5M172.3 319.5L198.8 309.4M168.6 331.8L198.0 319.5M198.0 319.5L222.3 309.4M197.1 331.8L223.8 319.5M223.8 319.5L245.7 309.4M225.6 331.8L249.5 319.5M249.5 319.5L269.2 309.4M254.1 331.8L275.3 319.5M275.3 319.5L292.7 309.4M282.6 331.8L301.0 319.5M301.0 319.5L316.1 309.4M311.1 331.8L326.7 319.5M326.7 319.5L339.6 309.4M339.6 331.8L352.5 319.5M352.5 319.5L363.1 309.4M396.6 331.8L404.0 319.5M404.0 319.5L410.0 309.4M425.1 331.8L429.7 319.5M429.7 319.5L433.5 309.4M453.6 331.8L455.4 319.5M455.4 319.5L456.9 309.4M482.1 331.8L481.2 319.5M481.2 319.5L480.4 309.4M510.6 331.8L506.9 319.5M506.9 319.5L503.9 309.4M539.1 331.8L532.7 319.5M532.7 319.5L527.3 309.4M567.6 331.8L558.4 319.5M558.4 319.5L550.8 309.4M596.1 331.8L584.1 319.5M584.1 319.5L574.3 309.4M624.6 331.8L609.9 319.5M609.9 319.5L597.7 309.4M681.6 331.8L661.4 319.5M661.4 319.5L644.7 309.4M710.1 331.8L687.1 319.5M687.1 319.5L668.2 309.4M738.6 331.8L712.8 319.5M712.8 319.5L691.6 309.4M767.1 331.8L738.6 319.5M738.6 319.5L715.1 309.4M795.6 331.8L764.3 319.5M764.3 319.5L738.6 309.4M824.1 331.8L790.1 319.5M790.1 319.5L762.0 309.4M852.6 331.8L815.8 319.5M815.8 319.5L785.5 309.4M881.1 331.8L841.5 319.5M841.5 319.5L809.0 309.4M909.6 331.8L867.3 319.5M867.3 319.5L832.4 309.4M966.6 331.8L918.8 319.5M918.8 319.5L879.4 309.4M995.1 331.8L944.5 319.5M944.5 319.5L902.8 309.4M1023.6 331.8L970.2 319.5M970.2 319.5L926.3 309.4M1052.1 331.8L996.0 319.5M996.0 319.5L949.8 309.4M1080.6 331.8L1021.7 319.5M1021.7 319.5L973.2 309.4M1109.1 331.8L1047.5 319.5M1047.5 319.5L996.7 309.4M1137.6 331.8L1073.2 319.5M1073.2 319.5L1020.2 309.4M1166.1 331.8L1098.9 319.5M1098.9 319.5L1043.6 309.4M1124.7 319.5L1067.1 309.4M1101.7 331.2L1207.2 322.5M841.2 339.8L973.9 329.8M973.9 329.8L1088.3 321.2M1088.3 321.2L1187.8 313.7M573.8 337.0L726.5 327.2M726.5 327.2L858.1 318.7M858.1 318.7L972.6 311.3M444.4 335.6L606.7 325.9M606.7 325.9L746.6 317.5M746.6 317.5L868.4 310.2M317.6 334.2L489.5 324.6M489.5 324.6L637.5 316.3M637.5 316.3L766.4 309.1M193.4 332.9L374.6 323.4M374.6 323.4L530.7 315.2M71.8 331.6L262.1 322.2M262.1 322.2L426.0 314.0M-47.3 330.3L151.9 321.0M151.9 321.0L323.5 312.9M-164.1 329.1L43.9 319.8M43.9 319.8L223.0 311.9M-62.0 318.7L124.5 310.8M-165.8 317.6L28.0 309.8" stroke-opacity="0.105"/>
<path d="M-27.6 347.0L26.1 331.8M-59.6 366.4L4.4 347.0M4.4 347.0L54.6 331.8M13.0 366.4L68.2 347.0M68.2 347.0L111.6 331.8M49.3 366.4L100.1 347.0M100.1 347.0L140.1 331.8M85.6 366.4L132.1 347.0M132.1 347.0L168.6 331.8M121.9 366.4L164.0 347.0M164.0 347.0L197.1 331.8M158.2 366.4L195.9 347.0M195.9 347.0L225.6 331.8M194.4 366.4L227.8 347.0M227.8 347.0L254.1 331.8M230.7 366.4L259.8 347.0M259.8 347.0L282.6 331.8M267.0 366.4L291.7 347.0M291.7 347.0L311.1 331.8M303.3 366.4L323.6 347.0M323.6 347.0L339.6 331.8M375.9 366.4L387.5 347.0M387.5 347.0L396.6 331.8M412.1 366.4L419.4 347.0M419.4 347.0L425.1 331.8M448.4 366.4L451.3 347.0M451.3 347.0L453.6 331.8M484.7 366.4L483.2 347.0M483.2 347.0L482.1 331.8M521.0 366.4L515.2 347.0M515.2 347.0L510.6 331.8M557.3 366.4L547.1 347.0M547.1 347.0L539.1 331.8M593.6 366.4L579.0 347.0M579.0 347.0L567.6 331.8M629.8 366.4L610.9 347.0M610.9 347.0L596.1 331.8M666.1 366.4L642.9 347.0M642.9 347.0L624.6 331.8M738.7 366.4L706.7 347.0M706.7 347.0L681.6 331.8M775.0 366.4L738.6 347.0M738.6 347.0L710.1 331.8M811.3 366.4L770.6 347.0M770.6 347.0L738.6 331.8M847.6 366.4L802.5 347.0M802.5 347.0L767.1 331.8M883.8 366.4L834.4 347.0M834.4 347.0L795.6 331.8M920.1 366.4L866.4 347.0M866.4 347.0L824.1 331.8M956.4 366.4L898.3 347.0M898.3 347.0L852.6 331.8M992.7 366.4L930.2 347.0M930.2 347.0L881.1 331.8M1029.0 366.4L962.1 347.0M962.1 347.0L909.6 331.8M1101.5 366.4L1026.0 347.0M1026.0 347.0L966.6 331.8M1137.8 366.4L1057.9 347.0M1057.9 347.0L995.1 331.8M1174.1 366.4L1089.8 347.0M1089.8 347.0L1023.6 331.8M1121.8 347.0L1052.1 331.8M1153.7 347.0L1080.6 331.8M1004.6 371.0L1146.0 356.5M832.5 369.2L989.0 354.8M989.0 354.8L1120.4 342.8M664.3 367.4L835.5 353.2M835.5 353.2L979.3 341.3M979.3 341.3L1101.7 331.2M274.7 382.6L499.6 365.6M499.6 365.6L685.3 351.6M685.3 351.6L841.2 339.8M-78.1 378.9L180.8 362.2M180.8 362.2L394.5 348.5M394.5 348.5L573.8 337.0M-249.0 377.1L26.4 360.6M26.4 360.6L253.6 347.0M253.6 347.0L444.4 335.6M-124.9 359.0L115.7 345.5M115.7 345.5L317.6 334.2M-19.4 344.1L193.4 332.9M-151.7 342.7L71.8 331.6" stroke-opacity="0.131"/>
<path d="M-59.6 391.9L13.0 366.4M-17.6 391.9L49.3 366.4M-59.8 427.0L24.4 391.9M24.4 391.9L85.6 366.4M-9.9 427.0L66.4 391.9M66.4 391.9L121.9 366.4M40.1 427.0L108.4 391.9M108.4 391.9L158.2 366.4M90.0 427.0L150.5 391.9M150.5 391.9L194.4 366.4M139.9 427.0L192.5 391.9M192.5 391.9L230.7 366.4M189.8 427.0L234.5 391.9M234.5 391.9L267.0 366.4M239.7 427.0L276.5 391.9M276.5 391.9L303.3 366.4M339.5 427.0L360.6 391.9M360.6 391.9L375.9 366.4M389.5 427.0L402.6 391.9M402.6 391.9L412.1 366.4M439.4 427.0L444.6 391.9M444.6 391.9L448.4 366.4M489.3 427.0L486.6 391.9M486.6 391.9L484.7 366.4M539.2 427.0L528.7 391.9M528.7 391.9L521.0 366.4M589.1 427.0L570.7 391.9M570.7 391.9L557.3 366.4M639.0 427.0L612.7 391.9M612.7 391.9L593.6 366.4M688.9 427.0L654.7 391.9M654.7 391.9L629.8 366.4M738.9 427.0L696.7 391.9M696.7 391.9L666.1 366.4M838.7 427.0L780.8 391.9M780.8 391.9L738.7 366.4M888.6 427.0L822.8 391.9M822.8 391.9L775.0 366.4M938.5 427.0L864.8 391.9M864.8 391.9L811.3 366.4M988.4 427.0L906.9 391.9M906.9 391.9L847.6 366.4M1038.3 427.0L948.9 391.9M948.9 391.9L883.8 366.4M1088.3 427.0L990.9 391.9M990.9 391.9L920.1 366.4M1138.2 427.0L1032.9 391.9M1032.9 391.9L956.4 366.4M1188.1 427.0L1074.9 391.9M1074.9 391.9L992.7 366.4M1117.0 391.9L1029.0 366.4M1201.0 391.9L1101.5 366.4M852.6 442.8L1061.7 414.8M1061.7 414.8L1226.8 392.7M600.2 440.1L839.2 412.4M839.2 412.4L1027.8 390.6M1027.8 390.6L1180.4 372.8M353.3 437.6L621.6 410.1M621.6 410.1L833.3 388.5M833.3 388.5L1004.6 371.0M111.8 435.1L408.7 407.9M408.7 407.9L643.0 386.5M643.0 386.5L832.5 369.2M-124.6 432.6L200.5 405.7M200.5 405.7L456.9 384.5M456.9 384.5L664.3 367.4M-3.4 403.6L274.7 382.6" stroke-opacity="0.158"/>
<path d="M-60.0 478.3L40.1 427.0M1.5 478.3L90.0 427.0M62.9 478.3L139.9 427.0M124.4 478.3L189.8 427.0M185.9 478.3L239.7 427.0M308.8 478.3L339.5 427.0M370.2 478.3L389.5 427.0M431.7 478.3L439.4 427.0M493.2 478.3L489.3 427.0M554.6 478.3L539.2 427.0M616.1 478.3L589.1 427.0M677.5 478.3L639.0 427.0M739.0 478.3L688.9 427.0M800.4 478.3L738.9 427.0M923.4 478.3L838.7 427.0M984.8 478.3L888.6 427.0M1046.3 478.3L938.5 427.0M1107.7 478.3L988.4 427.0M1169.2 478.3L1038.3 427.0M1230.7 478.3L1088.3 427.0M877.2 482.5L1110.7 445.5M579.1 479.4L852.6 442.8M287.5 476.4L600.2 440.1M2.2 473.5L353.3 437.6M-277.0 470.6L111.8 435.1" stroke-opacity="0.184"/>
<path d="M-1.5 222.0L5.2 221.8M5.2 221.8L11.8 221.6M11.8 221.6L18.2 221.3M-4.5 223.7L3.0 223.4M3.0 223.4L10.1 223.1M10.1 223.1L17.1 222.8M17.1 222.8L23.9 222.6M23.9 222.6L30.5 222.3M30.5 222.3L36.8 222.0M36.8 222.0L43.0 221.8M43.0 221.8L49.0 221.6M49.0 221.6L54.9 221.3M37.5 223.7L44.3 223.4M44.3 223.4L50.8 223.1M50.8 223.1L57.2 222.8M57.2 222.8L63.4 222.6M63.4 222.6L69.3 222.3M69.3 222.3L75.2 222.0M75.2 222.0L80.8 221.8M80.8 221.8L86.3 221.6M86.3 221.6L91.6 221.3M79.5 223.7L85.6 223.4M85.6 223.4L91.5 223.1M91.5 223.1L97.3 222.8M97.3 222.8L102.8 222.6M102.8 222.6L108.2 222.3M108.2 222.3L113.5 222.0M113.5 222.0L118.6 221.8M118.6 221.8L123.6 221.6M123.6 221.6L128.4 221.3M121.4 223.7L126.9 223.4M126.9 223.4L132.2 223.1M132.2 223.1L137.3 222.8M137.3 222.8L142.3 222.6M142.3 222.6L147.1 222.3M147.1 222.3L151.8 222.0M151.8 222.0L156.4 221.8M156.4 221.8L160.8 221.6M160.8 221.6L165.1 221.3M163.4 223.7L168.2 223.4M168.2 223.4L172.9 223.1M172.9 223.1L177.4 222.8M177.4 222.8L181.8 222.6M181.8 222.6L186.0 222.3M186.0 222.3L190.2 222.0M190.2 222.0L194.2 221.8M194.2 221.8L198.1 221.6M198.1 221.6L201.9 221.3M205.4 223.7L209.5 223.4M209.5 223.4L213.6 223.1M213.6 223.1L217.5 222.8M217.5 222.8L221.2 222.6M221.2 222.6L224.9 222.3M224.9 222.3L228.5 222.0M228.5 222.0L232.0 221.8M232.0 221.8L235.3 221.6M235.3 221.6L238.6 221.3M247.3 223.7L250.8 223.4M250.8 223.4L254.2 223.1M254.2 223.1L257.5 222.8M257.5 222.8L260.7 222.6M260.7 222.6L263.8 222.3M263.8 222.3L266.8 222.0M266.8 222.0L269.8 221.8M269.8 221.8L272.6 221.6M272.6 221.6L275.4 221.3M289.3 223.7L292.1 223.4M292.1 223.4L294.9 223.1M294.9 223.1L297.6 222.8M297.6 222.8L300.2 222.6M300.2 222.6L302.7 222.3M302.7 222.3L305.2 222.0M305.2 222.0L307.5 221.8M307.5 221.8L309.9 221.6M309.9 221.6L312.1 221.3M331.3 223.7L333.5 223.4M333.5 223.4L335.6 223.1M335.6 223.1L337.7 222.8M337.7 222.8L339.7 222.6M339.7 222.6L341.6 222.3M341.6 222.3L343.5 222.0M343.5 222.0L345.3 221.8M345.3 221.8L347.1 221.6M347.1 221.6L348.8 221.3M373.2 223.7L374.8 223.4M374.8 223.4L376.3 223.1M376.3 223.1L377.7 222.8M377.7 222.8L379.1 222.6M379.1 222.6L380.5 222.3M380.5 222.3L381.8 222.0M381.8 222.0L383.1 221.8M383.1 221.8L384.4 221.6M384.4 221.6L385.6 221.3M415.2 223.7L416.1 223.4M416.1 223.4L417.0 223.1M417.0 223.1L417.8 222.8M417.8 222.8L418.6 222.6M418.6 222.6L419.4 222.3M419.4 222.3L420.2 222.0M420.2 222.0L420.9 221.8M420.9 221.8L421.6 221.6M421.6 221.6L422.3 221.3M457.2 223.7L457.4 223.4M457.4 223.4L457.6 223.1M457.6 223.1L457.9 222.8M457.9 222.8L458.1 222.6M458.1 222.6L458.3 222.3M458.3 222.3L458.5 222.0M458.5 222.0L458.7 221.8M458.7 221.8L458.9 221.6M458.9 221.6L459.1 221.3M499.1 223.7L498.7 223.4M498.7 223.4L498.3 223.1M498.3 223.1L497.9 222.8M497.9 222.8L497.5 222.6M497.5 222.6L497.2 222.3M497.2 222.3L496.8 222.0M496.8 222.0L496.5 221.8M496.5 221.8L496.1 221.6M496.1 221.6L495.8 221.3M541.1 223.7L540.0 223.4M540.0 223.4L539.0 223.1M539.0 223.1L538.0 222.8M538.0 222.8L537.0 222.6M537.0 222.6L536.1 222.3M536.1 222.3L535.2 222.0M535.2 222.0L534.3 221.8M534.3 221.8L533.4 221.6M533.4 221.6L532.6 221.3M583.1 223.7L581.3 223.4M581.3 223.4L579.7 223.1M579.7 223.1L578.1 222.8M578.1 222.8L576.5 222.6M576.5 222.6L575.0 222.3M575.0 222.3L573.5 222.0M573.5 222.0L572.1 221.8M572.1 221.8L570.7 221.6M570.7 221.6L569.3 221.3M625.0 223.7L622.7 223.4M622.7 223.4L620.4 223.1M620.4 223.1L618.1 222.8M618.1 222.8L616.0 222.6M616.0 222.6L613.9 222.3M613.9 222.3L611.8 222.0M611.8 222.0L609.8 221.8M609.8 221.8L607.9 221.6M607.9 221.6L606.0 221.3M667.0 223.7L664.0 223.4M664.0 223.4L661.0 223.1M661.0 223.1L658.2 222.8M658.2 222.8L655.4 222.6M655.4 222.6L652.8 222.3M652.8 222.3L650.2 222.0M650.2 222.0L647.6 221.8M647.6 221.8L645.2 221.6M645.2 221.6L642.8 221.3M709.0 223.7L705.3 223.4M705.3 223.4L701.7 223.1M701.7 223.1L698.3 222.8M698.3 222.8L694.9 222.6M694.9 222.6L691.7 222.3M691.7 222.3L688.5 222.0M688.5 222.0L685.4 221.8M685.4 221.8L682.4 221.6M682.4 221.6L679.5 221.3M750.9 223.7L746.6 223.4M746.6 223.4L742.4 223.1M742.4 223.1L738.3 222.8M738.3 222.8L734.4 222.6M734.4 222.6L730.5 222.3M730.5 222.3L726.8 222.0M726.8 222.0L723.2 221.8M723.2 221.8L719.7 221.6M719.7 221.6L716.3 221.3M792.9 223.7L787.9 223.4M787.9 223.4L783.1 223.1M783.1 223.1L778.4 222.8M778.4 222.8L773.9 222.6M773.9 222.6L769.4 222.3M769.4 222.3L765.2 222.0M765.2 222.0L761.0 221.8M761.0 221.8L757.0 221.6M757.0 221.6L753.0 221.3M834.9 223.7L829.2 223.4M829.2 223.4L823.8 223.1M823.8 223.1L818.5 222.8M818.5 222.8L813.3 222.6M813.3 222.6L808.3 222.3M808.3 222.3L803.5 222.0M803.5 222.0L798.8 221.8M798.8 221.8L794.2 221.6M794.2 221.6L789.8 221.3M876.8 223.7L870.5 223.4M870.5 223.4L864.4 223.1M864.4 223.1L858.5 222.8M858.5 222.8L852.8 222.6M852.8 222.6L847.2 222.3M847.2 222.3L841.8 222.0M841.8 222.0L836.6 221.8M836.6 221.8L831.5 221.6M831.5 221.6L826.5 221.3M918.8 223.7L911.8 223.4M911.8 223.4L905.1 223.1M905.1 223.1L898.6 222.8M898.6 222.8L892.3 222.6M892.3 222.6L886.1 222.3M886.1 222.3L880.2 222.0M880.2 222.0L874.4 221.8M874.4 221.8L868.7 221.6M868.7 221.6L863.3 221.3M960.7 223.7L953.2 223.4M953.2 223.4L945.8 223.1M945.8 223.1L938.7 222.8M938.7 222.8L931.7 222.6M931.7 222.6L925.0 222.3M925.0 222.3L918.5 222.0M918.5 222.0L912.2 221.8M912.2 221.8L906.0 221.6M906.0 221.6L900.0 221.3M1002.7 223.7L994.5 223.4M994.5 223.4L986.5 223.1M986.5 223.1L978.7 222.8M978.7 222.8L971.2 222.6M971.2 222.6L963.9 222.3M963.9 222.3L956.8 222.0M956.8 222.0L949.9 221.8M949.9 221.8L943.2 221.6M943.2 221.6L936.7 221.3M1044.7 223.7L1035.8 223.4M1035.8 223.4L1027.2 223.1M1027.2 223.1L1018.8 222.8M1018.8 222.8L1010.7 222.6M1010.7 222.6L1002.8 222.3M1002.8 222.3L995.2 222.0M995.2 222.0L987.7 221.8M987.7 221.8L980.5 221.6M980.5 221.6L973.5 221.3M1086.6 223.7L1077.1 223.4M1077.1 223.4L1067.8 223.1M1067.8 223.1L1058.9 222.8M1058.9 222.8L1050.2 222.6M1050.2 222.6L1041.7 222.3M1041.7 222.3L1033.5 222.0M1033.5 222.0L1025.5 221.8M1025.5 221.8L1017.8 221.6M1017.8 221.6L1010.2 221.3M1108.5 223.1L1098.9 222.8M1098.9 222.8L1089.6 222.6M1089.6 222.6L1080.6 222.3M1080.6 222.3L1071.8 222.0M1071.8 222.0L1063.3 221.8M1063.3 221.8L1055.0 221.6M1055.0 221.6L1047.0 221.3M1110.2 222.0L1101.1 221.8M1101.1 221.8L1092.3 221.6M1092.3 221.6L1083.7 221.3M1063.3 223.7L1087.6 223.4M1087.6 223.4L1111.2 223.1M836.1 223.8L863.2 223.5M863.2 223.5L889.5 223.2M889.5 223.2L915.0 223.0M915.0 223.0L939.8 222.7M939.8 222.7L963.9 222.4M963.9 222.4L987.3 222.2M987.3 222.2L1010.1 222.0M1010.1 222.0L1032.2 221.7M1032.2 221.7L1053.7 221.5M607.7 223.9L635.9 223.6M635.9 223.6L663.4 223.4M663.4 223.4L690.1 223.1M690.1 223.1L716.1 222.9M716.1 222.9L741.4 222.6M741.4 222.6L766.1 222.4M766.1 222.4L790.1 222.2M790.1 222.2L813.5 222.0M813.5 222.0L836.3 221.7M836.3 221.7L858.6 221.5M858.6 221.5L880.3 221.3M388.1 223.9L416.7 223.7M416.7 223.7L444.6 223.4M444.6 223.4L471.7 223.2M471.7 223.2L498.2 223.0M498.2 223.0L524.0 222.7M524.0 222.7L549.3 222.5M549.3 222.5L573.9 222.3M573.9 222.3L597.9 222.1M597.9 222.1L621.4 221.9M621.4 221.9L644.4 221.7M644.4 221.7L666.8 221.5M666.8 221.5L688.7 221.4M180.8 223.8L208.8 223.6M208.8 223.6L236.3 223.4M236.3 223.4L263.1 223.2M263.1 223.2L289.3 223.0M289.3 223.0L314.9 222.8M314.9 222.8L340.0 222.6M340.0 222.6L364.5 222.4M364.5 222.4L388.6 222.2M388.6 222.2L412.1 222.0M412.1 222.0L435.1 221.9M435.1 221.9L457.6 221.7M457.6 221.7L479.7 221.5M-11.4 223.6L15.3 223.4M15.3 223.4L41.5 223.3M41.5 223.3L67.2 223.1M67.2 223.1L92.4 222.9M92.4 222.9L117.1 222.7M117.1 222.7L141.3 222.6M141.3 222.6L165.1 222.4M165.1 222.4L188.4 222.2M188.4 222.2L211.2 222.1M211.2 222.1L233.7 221.9M233.7 221.9L255.7 221.7M255.7 221.7L277.3 221.6M277.3 221.6L298.6 221.4M-21.7 222.3L0.2 222.1M0.2 222.1L21.7 222.0M21.7 222.0L42.9 221.9M42.9 221.9L63.8 221.7M63.8 221.7L84.3 221.6M84.3 221.6L104.5 221.5" stroke-opacity="0.077"/>
<path d="M-8.0 225.6L0.2 225.3M0.2 225.3L8.2 224.9M8.2 224.9L15.9 224.6M15.9 224.6L23.3 224.3M23.3 224.3L30.5 224.0M30.5 224.0L37.5 223.7M5.8 227.2L14.4 226.8M14.4 226.8L22.6 226.4M22.6 226.4L30.6 226.0M30.6 226.0L38.3 225.6M38.3 225.6L45.8 225.3M45.8 225.3L53.0 224.9M53.0 224.9L59.9 224.6M59.9 224.6L66.7 224.3M66.7 224.3L73.2 224.0M73.2 224.0L79.5 223.7M55.6 227.2L63.3 226.8M63.3 226.8L70.7 226.4M70.7 226.4L77.8 226.0M77.8 226.0L84.7 225.6M84.7 225.6L91.3 225.3M91.3 225.3L97.8 224.9M97.8 224.9L104.0 224.6M104.0 224.6L110.0 224.3M110.0 224.3L115.8 224.0M115.8 224.0L121.4 223.7M105.4 227.2L112.2 226.8M112.2 226.8L118.7 226.4M118.7 226.4L125.0 226.0M125.0 226.0L131.0 225.6M131.0 225.6L136.9 225.3M136.9 225.3L142.6 224.9M142.6 224.9L148.0 224.6M148.0 224.6L153.3 224.3M153.3 224.3L158.4 224.0M158.4 224.0L163.4 223.7M155.3 227.2L161.1 226.8M161.1 226.8L166.7 226.4M166.7 226.4L172.2 226.0M172.2 226.0L177.4 225.6M177.4 225.6L182.5 225.3M182.5 225.3L187.4 224.9M187.4 224.9L192.1 224.6M192.1 224.6L196.7 224.3M196.7 224.3L201.1 224.0M201.1 224.0L205.4 223.7M205.1 227.2L210.0 226.8M210.0 226.8L214.8 226.4M214.8 226.4L219.3 226.0M219.3 226.0L223.8 225.6M223.8 225.6L228.0 225.3M228.0 225.3L232.2 224.9M232.2 224.9L236.1 224.6M236.1 224.6L240.0 224.3M240.0 224.3L243.7 224.0M243.7 224.0L247.3 223.7M254.9 227.2L258.9 226.8M258.9 226.8L262.8 226.4M262.8 226.4L266.5 226.0M266.5 226.0L270.1 225.6M270.1 225.6L273.6 225.3M273.6 225.3L276.9 224.9M276.9 224.9L280.2 224.6M280.2 224.6L283.3 224.3M283.3 224.3L286.4 224.0M286.4 224.0L289.3 223.7M304.8 227.2L307.9 226.8M307.9 226.8L310.8 226.4M310.8 226.4L313.7 226.0M313.7 226.0L316.5 225.6M316.5 225.6L319.2 225.3M319.2 225.3L321.7 224.9M321.7 224.9L324.2 224.6M324.2 224.6L326.7 224.3M326.7 224.3L329.0 224.0M329.0 224.0L331.3 223.7M354.6 227.2L356.8 226.8M356.8 226.8L358.9 226.4M358.9 226.4L360.9 226.0M360.9 226.0L362.8 225.6M362.8 225.6L364.7 225.3M364.7 225.3L366.5 224.9M366.5 224.9L368.3 224.6M368.3 224.6L370.0 224.3M370.0 224.3L371.6 224.0M371.6 224.0L373.2 223.7M404.4 227.2L405.7 226.8M405.7 226.8L406.9 226.4M406.9 226.4L408.1 226.0M408.1 226.0L409.2 225.6M409.2 225.6L410.3 225.3M410.3 225.3L411.3 224.9M411.3 224.9L412.3 224.6M412.3 224.6L413.3 224.3M413.3 224.3L414.3 224.0M414.3 224.0L415.2 223.7M454.3 227.2L454.6 226.8M454.6 226.8L454.9 226.4M454.9 226.4L455.3 226.0M455.3 226.0L455.6 225.6M455.6 225.6L455.8 225.3M455.8 225.3L456.1 224.9M456.1 224.9L456.4 224.6M456.4 224.6L456.7 224.3M456.7 224.3L456.9 224.0M456.9 224.0L457.2 223.7M504.1 227.2L503.5 226.8M503.5 226.8L503.0 226.4M503.0 226.4L502.4 226.0M502.4 226.0L501.9 225.6M501.9 225.6L501.4 225.3M501.4 225.3L500.9 224.9M500.9 224.9L500.4 224.6M500.4 224.6L500.0 224.3M500.0 224.3L499.6 224.0M499.6 224.0L499.1 223.7M553.9 227.2L552.5 226.8M552.5 226.8L551.0 226.4M551.0 226.4L549.6 226.0M549.6 226.0L548.3 225.6M548.3 225.6L547.0 225.3M547.0 225.3L545.7 224.9M545.7 224.9L544.5 224.6M544.5 224.6L543.3 224.3M543.3 224.3L542.2 224.0M542.2 224.0L541.1 223.7M603.8 227.2L601.4 226.8M601.4 226.8L599.0 226.4M599.0 226.4L596.8 226.0M596.8 226.0L594.6 225.6M594.6 225.6L592.5 225.3M592.5 225.3L590.5 224.9M590.5 224.9L588.6 224.6M588.6 224.6L586.7 224.3M586.7 224.3L584.8 224.0M584.8 224.0L583.1 223.7M653.6 227.2L650.3 226.8M650.3 226.8L647.1 226.4M647.1 226.4L644.0 226.0M644.0 226.0L641.0 225.6M641.0 225.6L638.1 225.3M638.1 225.3L635.3 224.9M635.3 224.9L632.6 224.6M632.6 224.6L630.0 224.3M630.0 224.3L627.5 224.0M627.5 224.0L625.0 223.7M703.5 227.2L699.2 226.8M699.2 226.8L695.1 226.4M695.1 226.4L691.2 226.0M691.2 226.0L687.3 225.6M687.3 225.6L683.7 225.3M683.7 225.3L680.1 224.9M680.1 224.9L676.7 224.6M676.7 224.6L673.3 224.3M673.3 224.3L670.1 224.0M670.1 224.0L667.0 223.7M753.3 227.2L748.1 226.8M748.1 226.8L743.1 226.4M743.1 226.4L738.3 226.0M738.3 226.0L733.7 225.6M733.7 225.6L729.2 225.3M729.2 225.3L724.9 224.9M724.9 224.9L720.7 224.6M720.7 224.6L716.7 224.3M716.7 224.3L712.7 224.0M712.7 224.0L709.0 223.7M803.1 227.2L797.0 226.8M797.0 226.8L791.2 226.4M791.2 226.4L785.5 226.0M785.5 226.0L780.1 225.6M780.1 225.6L774.8 225.3M774.8 225.3L769.7 224.9M769.7 224.9L764.8 224.6M764.8 224.6L760.0 224.3M760.0 224.3L755.4 224.0M755.4 224.0L750.9 223.7M853.0 227.2L846.0 226.8M846.0 226.8L839.2 226.4M839.2 226.4L832.7 226.0M832.7 226.0L826.4 225.6M826.4 225.6L820.3 225.3M820.3 225.3L814.5 224.9M814.5 224.9L808.8 224.6M808.8 224.6L803.3 224.3M803.3 224.3L798.0 224.0M798.0 224.0L792.9 223.7M902.8 227.2L894.9 226.8M894.9 226.8L887.2 226.4M887.2 226.4L879.9 226.0M879.9 226.0L872.8 225.6M872.8 225.6L865.9 225.3M865.9 225.3L859.3 224.9M859.3 224.9L852.9 224.6M852.9 224.6L846.7 224.3M846.7 224.3L840.7 224.0M840.7 224.0L834.9 223.7M952.6 227.2L943.8 226.8M943.8 226.8L935.3 226.4M935.3 226.4L927.1 226.0M927.1 226.0L919.1 225.6M919.1 225.6L911.5 225.3M911.5 225.3L904.1 224.9M904.1 224.9L896.9 224.6M896.9 224.6L890.0 224.3M890.0 224.3L883.3 224.0M883.3 224.0L876.8 223.7M1002.5 227.2L992.7 226.8M992.7 226.8L983.3 226.4M983.3 226.4L974.2 226.0M974.2 226.0L965.5 225.6M965.5 225.6L957.0 225.3M957.0 225.3L948.9 224.9M948.9 224.9L941.0 224.6M941.0 224.6L933.3 224.3M933.3 224.3L925.9 224.0M925.9 224.0L918.8 223.7M1052.3 227.2L1041.6 226.8M1041.6 226.8L1031.3 226.4M1031.3 226.4L1021.4 226.0M1021.4 226.0L1011.8 225.6M1011.8 225.6L1002.6 225.3M1002.6 225.3L993.7 224.9M993.7 224.9L985.0 224.6M985.0 224.6L976.7 224.3M976.7 224.3L968.6 224.0M968.6 224.0L960.7 223.7M1102.1 227.2L1090.5 226.8M1090.5 226.8L1079.4 226.4M1079.4 226.4L1068.6 226.0M1068.6 226.0L1058.2 225.6M1058.2 225.6L1048.2 225.3M1048.2 225.3L1038.5 224.9M1038.5 224.9L1029.1 224.6M1029.1 224.6L1020.0 224.3M1020.0 224.3L1011.2 224.0M1011.2 224.0L1002.7 223.7M1104.6 225.6L1093.7 225.3M1093.7 225.3L1083.3 224.9M1083.3 224.9L1073.1 224.6M1073.1 224.6L1063.3 224.3M1063.3 224.3L1053.9 224.0M1053.9 224.0L1044.7 223.7M1106.7 224.3L1096.5 224.0M1096.5 224.0L1086.6 223.7M1026.4 227.2L1055.8 226.8M1055.8 226.8L1084.3 226.4M1084.3 226.4L1111.7 226.0M770.0 227.2L804.2 226.8M804.2 226.8L837.1 226.4M837.1 226.4L868.9 226.0M868.9 226.0L899.6 225.6M899.6 225.6L929.2 225.3M929.2 225.3L957.9 224.9M957.9 224.9L985.5 224.6M985.5 224.6L1012.3 224.3M1012.3 224.3L1038.2 224.0M1038.2 224.0L1063.3 223.7M548.7 226.8L585.1 226.4M585.1 226.4L620.3 226.0M620.3 226.0L654.2 225.7M654.2 225.7L687.1 225.3M687.1 225.3L718.8 225.0M718.8 225.0L749.6 224.7M749.6 224.7L779.3 224.4M779.3 224.4L808.2 224.1M808.2 224.1L836.1 223.8M273.9 227.0L312.2 226.6M312.2 226.6L349.2 226.3M349.2 226.3L385.1 226.0M385.1 226.0L419.9 225.6M419.9 225.6L453.6 225.3M453.6 225.3L486.2 225.0M486.2 225.0L518.0 224.7M518.0 224.7L548.7 224.4M548.7 224.4L578.6 224.2M578.6 224.2L607.7 223.9M17.2 227.0L55.9 226.7M55.9 226.7L93.5 226.4M93.5 226.4L130.0 226.1M130.0 226.1L165.5 225.8M165.5 225.8L200.0 225.5M200.0 225.5L233.5 225.2M233.5 225.2L266.1 224.9M266.1 224.9L297.8 224.7M297.8 224.7L328.7 224.4M328.7 224.4L358.8 224.1M358.8 224.1L388.1 223.9M-2.2 225.2L30.2 225.0M30.2 225.0L61.8 224.7M61.8 224.7L92.6 224.5M92.6 224.5L122.7 224.3M122.7 224.3L152.1 224.0M152.1 224.0L180.8 223.8" stroke-opacity="0.155"/>
<path d="M-3.2 227.6L5.8 227.2M-7.4 230.5L2.7 230.0M2.7 230.0L12.5 229.5M12.5 229.5L21.8 229.0M21.8 229.0L30.7 228.5M30.7 228.5L39.3 228.0M39.3 228.0L47.6 227.6M47.6 227.6L55.6 227.2M30.9 231.7L40.6 231.1M40.6 231.1L50.0 230.5M50.0 230.5L58.9 230.0M58.9 230.0L67.4 229.5M67.4 229.5L75.7 229.0M75.7 229.0L83.5 228.5M83.5 228.5L91.1 228.0M91.1 228.0L98.4 227.6M98.4 227.6L105.4 227.2M90.8 231.7L99.3 231.1M99.3 231.1L107.3 230.5M107.3 230.5L115.0 230.0M115.0 230.0L122.4 229.5M122.4 229.5L129.5 229.0M129.5 229.0L136.4 228.5M136.4 228.5L142.9 228.0M142.9 228.0L149.2 227.6M149.2 227.6L155.3 227.2M150.8 231.7L157.9 231.1M157.9 231.1L164.7 230.5M164.7 230.5L171.2 230.0M171.2 230.0L177.4 229.5M177.4 229.5L183.4 229.0M183.4 229.0L189.2 228.5M189.2 228.5L194.7 228.0M194.7 228.0L200.0 227.6M200.0 227.6L205.1 227.2M210.8 231.7L216.5 231.1M216.5 231.1L222.1 230.5M222.1 230.5L227.3 230.0M227.3 230.0L232.4 229.5M232.4 229.5L237.3 229.0M237.3 229.0L242.0 228.5M242.0 228.5L246.5 228.0M246.5 228.0L250.8 227.6M250.8 227.6L254.9 227.2M270.7 231.7L275.2 231.1M275.2 231.1L279.4 230.5M279.4 230.5L283.5 230.0M283.5 230.0L287.4 229.5M287.4 229.5L291.2 229.0M291.2 229.0L294.8 228.5M294.8 228.5L298.2 228.0M298.2 228.0L301.6 227.6M301.6 227.6L304.8 227.2M330.7 231.7L333.8 231.1M333.8 231.1L336.8 230.5M336.8 230.5L339.7 230.0M339.7 230.0L342.4 229.5M342.4 229.5L345.0 229.0M345.0 229.0L347.6 228.5M347.6 228.5L350.0 228.0M350.0 228.0L352.4 227.6M352.4 227.6L354.6 227.2M390.6 231.7L392.4 231.1M392.4 231.1L394.2 230.5M394.2 230.5L395.8 230.0M395.8 230.0L397.4 229.5M397.4 229.5L398.9 229.0M398.9 229.0L400.4 228.5M400.4 228.5L401.8 228.0M401.8 228.0L403.1 227.6M403.1 227.6L404.4 227.2M450.6 231.7L451.1 231.1M451.1 231.1L451.5 230.5M451.5 230.5L452.0 230.0M452.0 230.0L452.4 229.5M452.4 229.5L452.8 229.0M452.8 229.0L453.2 228.5M453.2 228.5L453.6 228.0M453.6 228.0L453.9 227.6M453.9 227.6L454.3 227.2M510.5 231.7L509.7 231.1M509.7 231.1L508.9 230.5M508.9 230.5L508.1 230.0M508.1 230.0L507.4 229.5M507.4 229.5L506.7 229.0M506.7 229.0L506.0 228.5M506.0 228.5L505.3 228.0M505.3 228.0L504.7 227.6M504.7 227.6L504.1 227.2M570.5 231.7L568.3 231.1M568.3 231.1L566.3 230.5M566.3 230.5L564.3 230.0M564.3 230.0L562.4 229.5M562.4 229.5L560.6 229.0M560.6 229.0L558.8 228.5M558.8 228.5L557.1 228.0M557.1 228.0L555.5 227.6M555.5 227.6L553.9 227.2M630.4 231.7L626.9 231.1M626.9 231.1L623.6 230.5M623.6 230.5L620.4 230.0M620.4 230.0L617.4 229.5M617.4 229.5L614.4 229.0M614.4 229.0L611.6 228.5M611.6 228.5L608.9 228.0M608.9 228.0L606.3 227.6M606.3 227.6L603.8 227.2M690.4 231.7L685.6 231.1M685.6 231.1L681.0 230.5M681.0 230.5L676.6 230.0M676.6 230.0L672.4 229.5M672.4 229.5L668.3 229.0M668.3 229.0L664.4 228.5M664.4 228.5L660.7 228.0M660.7 228.0L657.1 227.6M657.1 227.6L653.6 227.2M750.3 231.7L744.2 231.1M744.2 231.1L738.3 230.5M738.3 230.5L732.7 230.0M732.7 230.0L727.3 229.5M727.3 229.5L722.2 229.0M722.2 229.0L717.2 228.5M717.2 228.5L712.5 228.0M712.5 228.0L707.9 227.6M707.9 227.6L703.5 227.2M810.3 231.7L802.8 231.1M802.8 231.1L795.7 230.5M795.7 230.5L788.9 230.0M788.9 230.0L782.3 229.5M782.3 229.5L776.1 229.0M776.1 229.0L770.0 228.5M770.0 228.5L764.2 228.0M764.2 228.0L758.7 227.6M758.7 227.6L753.3 227.2M870.3 231.7L861.5 231.1M861.5 231.1L853.1 230.5M853.1 230.5L845.0 230.0M845.0 230.0L837.3 229.5M837.3 229.5L829.9 229.0M829.9 229.0L822.8 228.5M822.8 228.5L816.0 228.0M816.0 228.0L809.4 227.6M809.4 227.6L803.1 227.2M930.2 231.7L920.1 231.1M920.1 231.1L910.4 230.5M910.4 230.5L901.2 230.0M901.2 230.0L892.3 229.5M892.3 229.5L883.8 229.0M883.8 229.0L875.6 228.5M875.6 228.5L867.8 228.0M867.8 228.0L860.2 227.6M860.2 227.6L853.0 227.2M990.2 231.7L978.7 231.1M978.7 231.1L967.8 230.5M967.8 230.5L957.3 230.0M957.3 230.0L947.3 229.5M947.3 229.5L937.7 229.0M937.7 229.0L928.4 228.5M928.4 228.5L919.6 228.0M919.6 228.0L911.0 227.6M911.0 227.6L902.8 227.2M1050.1 231.7L1037.4 231.1M1037.4 231.1L1025.2 230.5M1025.2 230.5L1013.5 230.0M1013.5 230.0L1002.3 229.5M1002.3 229.5L991.6 229.0M991.6 229.0L981.3 228.5M981.3 228.5L971.3 228.0M971.3 228.0L961.8 227.6M961.8 227.6L952.6 227.2M1110.1 231.7L1096.0 231.1M1096.0 231.1L1082.5 230.5M1082.5 230.5L1069.7 230.0M1069.7 230.0L1057.3 229.5M1057.3 229.5L1045.4 229.0M1045.4 229.0L1034.1 228.5M1034.1 228.5L1023.1 228.0M1023.1 228.0L1012.6 227.6M1012.6 227.6L1002.5 227.2M1112.3 229.5L1099.3 229.0M1099.3 229.0L1086.9 228.5M1086.9 228.5L1074.9 228.0M1074.9 228.0L1063.4 227.6M1063.4 227.6L1052.3 227.2M1009.7 231.7L1045.4 231.1M1045.4 231.1L1079.5 230.5M1079.5 230.5L1112.2 230.0M701.3 231.7L743.8 231.1M743.8 231.1L784.4 230.5M784.4 230.5L823.4 230.0M823.4 230.0L860.7 229.5M860.7 229.5L896.5 229.0M896.5 229.0L930.9 228.5M930.9 228.5L964.0 228.0M964.0 228.0L995.8 227.6M995.8 227.6L1026.4 227.2M392.8 231.7L442.1 231.1M442.1 231.1L489.3 230.5M489.3 230.5L534.5 230.0M534.5 230.0L577.8 229.5M577.8 229.5L619.3 229.0M619.3 229.0L659.3 228.5M659.3 228.5L697.6 228.0M697.6 228.0L734.5 227.6M734.5 227.6L770.0 227.2M97.7 231.5L151.4 231.0M151.4 231.0L202.9 230.4M202.9 230.4L252.3 229.9M252.3 229.9L299.7 229.4M299.7 229.4L345.2 228.9M345.2 228.9L389.1 228.5M389.1 228.5L431.2 228.0M431.2 228.0L471.8 227.6M471.8 227.6L510.9 227.2M510.9 227.2L548.7 226.8M-33.9 229.9L14.9 229.4M14.9 229.4L62.0 229.0M62.0 229.0L107.4 228.6M107.4 228.6L151.2 228.2M151.2 228.2L193.5 227.8M193.5 227.8L234.4 227.4M234.4 227.4L273.9 227.0M-22.7 227.4L17.2 227.0" stroke-opacity="0.232"/>
<path d="M-1.2 233.6L10.0 232.9M10.0 232.9L20.7 232.3M20.7 232.3L30.9 231.7M-6.4 238.5L6.8 237.5M6.8 237.5L19.3 236.7M19.3 236.7L31.1 235.8M31.1 235.8L42.3 235.1M42.3 235.1L53.0 234.3M53.0 234.3L63.1 233.6M63.1 233.6L72.8 232.9M72.8 232.9L82.0 232.3M82.0 232.3L90.8 231.7M68.8 238.5L79.9 237.5M79.9 237.5L90.5 236.7M90.5 236.7L100.4 235.8M100.4 235.8L109.9 235.1M109.9 235.1L118.9 234.3M118.9 234.3L127.4 233.6M127.4 233.6L135.6 232.9M135.6 232.9L143.4 232.3M143.4 232.3L150.8 231.7M144.1 238.5L153.1 237.5M153.1 237.5L161.7 236.7M161.7 236.7L169.8 235.8M169.8 235.8L177.5 235.1M177.5 235.1L184.8 234.3M184.8 234.3L191.7 233.6M191.7 233.6L198.4 232.9M198.4 232.9L204.7 232.3M204.7 232.3L210.8 231.7M219.3 238.5L226.3 237.5M226.3 237.5L232.9 236.7M232.9 236.7L239.1 235.8M239.1 235.8L245.0 235.1M245.0 235.1L250.7 234.3M250.7 234.3L256.1 233.6M256.1 233.6L261.2 232.9M261.2 232.9L266.0 232.3M266.0 232.3L270.7 231.7M294.5 238.5L299.4 237.5M299.4 237.5L304.1 236.7M304.1 236.7L308.4 235.8M308.4 235.8L312.6 235.1M312.6 235.1L316.6 234.3M316.6 234.3L320.4 233.6M320.4 233.6L324.0 232.9M324.0 232.9L327.4 232.3M327.4 232.3L330.7 231.7M369.7 238.5L372.6 237.5M372.6 237.5L375.3 236.7M375.3 236.7L377.8 235.8M377.8 235.8L380.2 235.1M380.2 235.1L382.5 234.3M382.5 234.3L384.7 233.6M384.7 233.6L386.7 232.9M386.7 232.9L388.7 232.3M388.7 232.3L390.6 231.7M445.0 238.5L445.7 237.5M445.7 237.5L446.4 236.7M446.4 236.7L447.1 235.8M447.1 235.8L447.8 235.1M447.8 235.1L448.4 234.3M448.4 234.3L449.0 233.6M449.0 233.6L449.5 232.9M449.5 232.9L450.1 232.3M450.1 232.3L450.6 231.7M520.2 238.5L518.9 237.5M518.9 237.5L517.6 236.7M517.6 236.7L516.5 235.8M516.5 235.8L515.4 235.1M515.4 235.1L514.3 234.3M514.3 234.3L513.3 233.6M513.3 233.6L512.3 232.9M512.3 232.9L511.4 232.3M511.4 232.3L510.5 231.7M595.4 238.5L592.0 237.5M592.0 237.5L588.8 236.7M588.8 236.7L585.8 235.8M585.8 235.8L582.9 235.1M582.9 235.1L580.2 234.3M580.2 234.3L577.6 233.6M577.6 233.6L575.1 232.9M575.1 232.9L572.7 232.3M572.7 232.3L570.5 231.7M670.7 238.5L665.2 237.5M665.2 237.5L660.0 236.7M660.0 236.7L655.2 235.8M655.2 235.8L650.5 235.1M650.5 235.1L646.1 234.3M646.1 234.3L641.9 233.6M641.9 233.6L637.9 232.9M637.9 232.9L634.1 232.3M634.1 232.3L630.4 231.7M745.9 238.5L738.4 237.5M738.4 237.5L731.2 236.7M731.2 236.7L724.5 235.8M724.5 235.8L718.1 235.1M718.1 235.1L712.0 234.3M712.0 234.3L706.2 233.6M706.2 233.6L700.7 232.9M700.7 232.9L695.4 232.3M695.4 232.3L690.4 231.7M821.1 238.5L811.5 237.5M811.5 237.5L802.4 236.7M802.4 236.7L793.8 235.8M793.8 235.8L785.7 235.1M785.7 235.1L777.9 234.3M777.9 234.3L770.5 233.6M770.5 233.6L763.5 232.9M763.5 232.9L756.8 232.3M756.8 232.3L750.3 231.7M896.4 238.5L884.7 237.5M884.7 237.5L873.6 236.7M873.6 236.7L863.2 235.8M863.2 235.8L853.2 235.1M853.2 235.1L843.8 234.3M843.8 234.3L834.8 233.6M834.8 233.6L826.3 232.9M826.3 232.9L818.1 232.3M818.1 232.3L810.3 231.7M971.6 238.5L957.8 237.5M957.8 237.5L944.8 236.7M944.8 236.7L932.5 235.8M932.5 235.8L920.8 235.1M920.8 235.1L909.7 234.3M909.7 234.3L899.1 233.6M899.1 233.6L889.0 232.9M889.0 232.9L879.4 232.3M879.4 232.3L870.3 231.7M1046.8 238.5L1031.0 237.5M1031.0 237.5L1016.0 236.7M1016.0 236.7L1001.9 235.8M1001.9 235.8L988.4 235.1M988.4 235.1L975.6 234.3M975.6 234.3L963.4 233.6M963.4 233.6L951.8 232.9M951.8 232.9L940.8 232.3M940.8 232.3L930.2 231.7M1104.2 237.5L1087.2 236.7M1087.2 236.7L1071.2 235.8M1071.2 235.8L1056.0 235.1M1056.0 235.1L1041.5 234.3M1041.5 234.3L1027.7 233.6M1027.7 233.6L1014.6 232.9M1014.6 232.9L1002.1 232.3M1002.1 232.3L990.2 231.7M1107.4 234.3L1092.0 233.6M1092.0 233.6L1077.4 232.9M1077.4 232.9L1063.4 232.3M1063.4 232.3L1050.1 231.7M990.2 238.3L1032.9 237.5M1032.9 237.5L1073.4 236.6M1073.4 236.6L1112.0 235.9M597.5 238.5L653.4 237.5M653.4 237.5L706.3 236.7M706.3 236.7L756.4 235.8M756.4 235.8L804.0 235.1M804.0 235.1L849.2 234.3M849.2 234.3L892.2 233.6M892.2 233.6L933.2 232.9M933.2 232.9L972.3 232.3M972.3 232.3L1009.7 231.7M210.5 238.5L277.0 237.5M277.0 237.5L340.0 236.7M340.0 236.7L399.7 235.8M399.7 235.8L456.3 235.1M456.3 235.1L510.2 234.3M510.2 234.3L561.4 233.6M561.4 233.6L610.2 232.9M610.2 232.9L656.8 232.3M656.8 232.3L701.3 231.7M-26.3 236.7L42.9 235.8M42.9 235.8L108.7 235.1M108.7 235.1L171.1 234.3M171.1 234.3L230.6 233.6M230.6 233.6L287.2 232.9M287.2 232.9L341.2 232.3M341.2 232.3L392.8 231.7M-17.1 232.7L41.6 232.1M41.6 232.1L97.7 231.5" stroke-opacity="0.310"/>
<path d="M-13.8 245.3L2.3 244.0M2.3 244.0L17.3 242.7M17.3 242.7L31.4 241.6M31.4 241.6L44.6 240.5M44.6 240.5L57.1 239.4M57.1 239.4L68.8 238.5M31.7 249.9L47.9 248.3M47.9 248.3L62.9 246.7M62.9 246.7L76.8 245.3M76.8 245.3L89.9 244.0M89.9 244.0L102.1 242.7M102.1 242.7L113.6 241.6M113.6 241.6L124.3 240.5M124.3 240.5L134.5 239.4M134.5 239.4L144.1 238.5M132.7 249.9L145.1 248.3M145.1 248.3L156.7 246.7M156.7 246.7L167.5 245.3M167.5 245.3L177.5 244.0M177.5 244.0L186.9 242.7M186.9 242.7L195.8 241.6M195.8 241.6L204.1 240.5M204.1 240.5L211.9 239.4M211.9 239.4L219.3 238.5M233.6 249.9L242.4 248.3M242.4 248.3L250.5 246.7M250.5 246.7L258.1 245.3M258.1 245.3L265.2 244.0M265.2 244.0L271.8 242.7M271.8 242.7L278.0 241.6M278.0 241.6L283.8 240.5M283.8 240.5L289.3 239.4M289.3 239.4L294.5 238.5M334.6 249.9L339.6 248.3M339.6 248.3L344.3 246.7M344.3 246.7L348.7 245.3M348.7 245.3L352.8 244.0M352.8 244.0L356.6 242.7M356.6 242.7L360.2 241.6M360.2 241.6L363.6 240.5M363.6 240.5L366.7 239.4M366.7 239.4L369.7 238.5M435.5 249.9L436.9 248.3M436.9 248.3L438.2 246.7M438.2 246.7L439.3 245.3M439.3 245.3L440.4 244.0M440.4 244.0L441.5 242.7M441.5 242.7L442.4 241.6M442.4 241.6L443.3 240.5M443.3 240.5L444.2 239.4M444.2 239.4L445.0 238.5M536.5 249.9L534.2 248.3M534.2 248.3L532.0 246.7M532.0 246.7L530.0 245.3M530.0 245.3L528.1 244.0M528.1 244.0L526.3 242.7M526.3 242.7L524.6 241.6M524.6 241.6L523.1 240.5M523.1 240.5L521.6 239.4M521.6 239.4L520.2 238.5M637.4 249.9L631.4 248.3M631.4 248.3L625.8 246.7M625.8 246.7L620.6 245.3M620.6 245.3L615.7 244.0M615.7 244.0L611.1 242.7M611.1 242.7L606.8 241.6M606.8 241.6L602.8 240.5M602.8 240.5L599.0 239.4M599.0 239.4L595.4 238.5M738.4 249.9L728.7 248.3M728.7 248.3L719.6 246.7M719.6 246.7L711.2 245.3M711.2 245.3L703.3 244.0M703.3 244.0L696.0 242.7M696.0 242.7L689.0 241.6M689.0 241.6L682.6 240.5M682.6 240.5L676.4 239.4M676.4 239.4L670.7 238.5M839.3 249.9L825.9 248.3M825.9 248.3L813.4 246.7M813.4 246.7L801.8 245.3M801.8 245.3L791.0 244.0M791.0 244.0L780.8 242.7M780.8 242.7L771.3 241.6M771.3 241.6L762.3 240.5M762.3 240.5L753.9 239.4M753.9 239.4L745.9 238.5M940.3 249.9L923.2 248.3M923.2 248.3L907.3 246.7M907.3 246.7L892.4 245.3M892.4 245.3L878.6 244.0M878.6 244.0L865.6 242.7M865.6 242.7L853.5 241.6M853.5 241.6L842.0 240.5M842.0 240.5L831.3 239.4M831.3 239.4L821.1 238.5M1041.2 249.9L1020.4 248.3M1020.4 248.3L1001.1 246.7M1001.1 246.7L983.1 245.3M983.1 245.3L966.2 244.0M966.2 244.0L950.5 242.7M950.5 242.7L935.7 241.6M935.7 241.6L921.8 240.5M921.8 240.5L908.7 239.4M908.7 239.4L896.4 238.5M1117.7 248.3L1094.9 246.7M1094.9 246.7L1073.7 245.3M1073.7 245.3L1053.9 244.0M1053.9 244.0L1035.3 242.7M1035.3 242.7L1017.9 241.6M1017.9 241.6L1001.5 240.5M1001.5 240.5L986.1 239.4M986.1 239.4L971.6 238.5M1120.1 242.7L1100.1 241.6M1100.1 241.6L1081.3 240.5M1081.3 240.5L1063.5 239.4M1063.5 239.4L1046.8 238.5M948.4 249.7L1001.9 248.3M1001.9 248.3L1052.2 247.0M1052.2 247.0L1099.4 245.7M1099.4 245.7L1143.8 244.5M470.2 248.9L543.8 247.4M543.8 247.4L612.4 246.0M612.4 246.0L676.7 244.7M676.7 244.7L737.1 243.5M737.1 243.5L793.8 242.3M793.8 242.3L847.2 241.3M847.2 241.3L897.5 240.2M897.5 240.2L945.1 239.3M945.1 239.3L990.2 238.3M-96.6 249.9L3.1 248.3M3.1 248.3L95.8 246.7M95.8 246.7L182.1 245.3M182.1 245.3L262.8 244.0M262.8 244.0L338.3 242.7M338.3 242.7L409.1 241.6M409.1 241.6L475.6 240.5M475.6 240.5L538.3 239.4M538.3 239.4L597.5 238.5M-13.9 241.6L65.4 240.5M65.4 240.5L140.0 239.4M140.0 239.4L210.5 238.5" stroke-opacity="0.388"/>
<path d="M-4.5 253.6L14.3 251.7M14.3 251.7L31.7 249.9M-15.7 269.5L9.6 266.2M9.6 266.2L32.4 263.1M32.4 263.1L53.0 260.4M53.0 260.4L71.8 257.9M71.8 257.9L89.0 255.7M89.0 255.7L104.8 253.6M104.8 253.6L119.3 251.7M119.3 251.7L132.7 249.9M109.5 273.2L129.3 269.5M129.3 269.5L147.1 266.2M147.1 266.2L163.1 263.1M163.1 263.1L177.6 260.4M177.6 260.4L190.8 257.9M190.8 257.9L202.9 255.7M202.9 255.7L214.0 253.6M214.0 253.6L224.2 251.7M224.2 251.7L233.6 249.9M262.9 273.2L274.4 269.5M274.4 269.5L284.6 266.2M284.6 266.2L293.9 263.1M293.9 263.1L302.3 260.4M302.3 260.4L309.9 257.9M309.9 257.9L316.9 255.7M316.9 255.7L323.3 253.6M323.3 253.6L329.1 251.7M329.1 251.7L334.6 249.9M416.3 273.2L419.4 269.5M419.4 269.5L422.1 266.2M422.1 266.2L424.6 263.1M424.6 263.1L426.9 260.4M426.9 260.4L428.9 257.9M428.9 257.9L430.8 255.7M430.8 255.7L432.5 253.6M432.5 253.6L434.1 251.7M434.1 251.7L435.5 249.9M569.7 273.2L564.4 269.5M564.4 269.5L559.7 266.2M559.7 266.2L555.4 263.1M555.4 263.1L551.5 260.4M551.5 260.4L548.0 257.9M548.0 257.9L544.7 255.7M544.7 255.7L541.8 253.6M541.8 253.6L539.0 251.7M539.0 251.7L536.5 249.9M723.1 273.2L709.4 269.5M709.4 269.5L697.2 266.2M697.2 266.2L686.1 263.1M686.1 263.1L676.1 260.4M676.1 260.4L667.0 257.9M667.0 257.9L658.7 255.7M658.7 255.7L651.0 253.6M651.0 253.6L644.0 251.7M644.0 251.7L637.4 249.9M876.5 273.2L854.5 269.5M854.5 269.5L834.7 266.2M834.7 266.2L816.9 263.1M816.9 263.1L800.7 260.4M800.7 260.4L786.0 257.9M786.0 257.9L772.6 255.7M772.6 255.7L760.3 253.6M760.3 253.6L748.9 251.7M748.9 251.7L738.4 249.9M1029.9 273.2L999.5 269.5M999.5 269.5L972.2 266.2M972.2 266.2L947.6 263.1M947.6 263.1L925.4 260.4M925.4 260.4L905.1 257.9M905.1 257.9L886.5 255.7M886.5 255.7L869.5 253.6M869.5 253.6L853.8 251.7M853.8 251.7L839.3 249.9M1109.7 266.2L1078.4 263.1M1078.4 263.1L1050.0 260.4M1050.0 260.4L1024.1 257.9M1024.1 257.9L1000.5 255.7M1000.5 255.7L978.8 253.6M978.8 253.6L958.8 251.7M958.8 251.7L940.3 249.9M1114.4 255.7L1088.0 253.6M1088.0 253.6L1063.7 251.7M1063.7 251.7L1041.2 249.9M895.1 271.7L969.1 268.9M969.1 268.9L1037.1 266.2M1037.1 266.2L1099.7 263.8M1099.7 263.8L1157.5 261.6M124.2 271.7L241.3 268.6M241.3 268.6L348.0 265.7M348.0 265.7L445.5 263.1M445.5 263.1L535.0 260.7M535.0 260.7L617.5 258.5M617.5 258.5L693.7 256.5M693.7 256.5L764.4 254.6M764.4 254.6L830.1 252.9M830.1 252.9L891.2 251.3M891.2 251.3L948.4 249.7M-109.1 260.7L8.1 258.3M8.1 258.3L115.7 256.1M115.7 256.1L214.8 254.1M214.8 254.1L306.4 252.3M306.4 252.3L391.3 250.5M391.3 250.5L470.2 248.9" stroke-opacity="0.465"/>
<path d="M-37.7 300.9L0.6 293.7M0.6 293.7L33.5 287.5M33.5 287.5L62.2 282.1M62.2 282.1L87.3 277.4M87.3 277.4L109.5 273.2M36.3 347.0L83.1 331.8M83.1 331.8L120.8 319.5M120.8 319.5L151.9 309.4M151.9 309.4L177.9 300.9M177.9 300.9L200.0 293.7M200.0 293.7L219.0 287.5M219.0 287.5L235.6 282.1M235.6 282.1L250.1 277.4M250.1 277.4L262.9 273.2M355.5 347.0L368.1 331.8M368.1 331.8L378.2 319.5M378.2 319.5L386.5 309.4M386.5 309.4L393.5 300.9M393.5 300.9L399.5 293.7M399.5 293.7L404.6 287.5M404.6 287.5L409.0 282.1M409.0 282.1L412.9 277.4M412.9 277.4L416.3 273.2M674.8 347.0L653.1 331.8M653.1 331.8L635.6 319.5M635.6 319.5L621.2 309.4M621.2 309.4L609.2 300.9M609.2 300.9L598.9 293.7M598.9 293.7L590.1 287.5M590.1 287.5L582.4 282.1M582.4 282.1L575.7 277.4M575.7 277.4L569.7 273.2M994.1 347.0L938.1 331.8M938.1 331.8L893.0 319.5M893.0 319.5L855.9 309.4M855.9 309.4L824.8 300.9M824.8 300.9L798.3 293.7M798.3 293.7L775.6 287.5M775.6 287.5L755.8 282.1M755.8 282.1L738.5 277.4M738.5 277.4L723.1 273.2M1150.4 319.5L1090.6 309.4M1090.6 309.4L1040.4 300.9M1040.4 300.9L997.8 293.7M997.8 293.7L961.1 287.5M961.1 287.5L929.2 282.1M929.2 282.1L901.3 277.4M901.3 277.4L876.5 273.2M1102.7 282.1L1064.1 277.4M1064.1 277.4L1029.9 273.2M538.3 350.0L706.1 338.4M706.1 338.4L848.9 328.5M848.9 328.5L971.9 319.9M971.9 319.9L1079.0 312.5M1079.0 312.5L1173.1 306.0M-66.7 308.7L108.1 302.0M108.1 302.0L261.7 296.1M261.7 296.1L397.6 290.9M397.6 290.9L518.7 286.2M518.7 286.2L627.3 282.0M627.3 282.0L725.4 278.2M725.4 278.2L814.2 274.8M814.2 274.8L895.1 271.7M-5.0 275.1L124.2 271.7" stroke-opacity="0.542"/>
<path d="M-23.3 366.4L36.3 347.0M247.3 478.3L289.6 427.0M289.6 427.0L318.5 391.9M318.5 391.9L339.6 366.4M339.6 366.4L355.5 347.0M861.9 478.3L788.8 427.0M788.8 427.0L738.8 391.9M738.8 391.9L702.4 366.4M702.4 366.4L674.8 347.0M1159.0 391.9L1065.3 366.4M1065.3 366.4L994.1 347.0M-202.9 401.5L96.4 380.7M96.4 380.7L338.5 363.9M338.5 363.9L538.3 350.0" stroke-opacity="0.620"/>
</g></svg>
<svg class="a" style="left:364px;top:180px;overflow:hidden" width="1101" height="465" viewBox="364 180 1101 465">
<defs>
<linearGradient id="roofg" x1="0" y1="0" x2="1" y2="0"><stop offset="0" stop-color="#d7dbe6"/><stop offset="0.25" stop-color="#8f8f8f"/><stop offset="0.6" stop-color="#b0b0b8"/><stop offset="1" stop-color="#c4c6d0"/></linearGradient>
</defs>
<!-- roof canopy -->
<polygon fill="#b7b6be" points="798,370.5 811.7,362 830.6,361 851,362.4 864.5,365.2 888,368.5 910,368 910,384 880,380 850,376 830,373.5 812,372"/>
<polygon fill="#6d6a68" points="801.5,371.2 812,364.5 830,363.2 851,364.8 864.5,367.2 874,371 884,375 893,377.5 902,378.3 884,378.6 866,376.5 852,374.2 840,372.8 826,371.8 812,371.6"/>
<polygon fill="#c9c9d3" points="851,366 857,366.5 857,375 851,374"/>
<polygon fill="#c2c2cc" points="856,369 864,369.5 864,376.5 856,375.5"/>
<polygon fill="#8b8c9a" points="890,377.3 910,377 910,384 895,382.5"/>
<polygon fill="#d9e1ef" points="798,370.5 811.7,362 813.5,363 801,371.5"/>
<!-- beige panel -->
<polygon fill="#d5ccb2" points="873.3,404 885.5,407 885.5,552.9 873.3,532.6"/>
<polygon fill="#9da2b3" points="873.1,405.5 881.5,407 881.5,434.4 873.1,432.5"/>
<polygon fill="#80869a" points="873.1,418 881.5,421 881.5,434.4 873.1,432"/>
<!-- copper sliver -->
<polygon fill="#7a4a3e" points="836.4,480.3 842,479.5 874.3,505.2 883.1,512 883.1,533 874.3,525 838,483.5"/>
<polyline fill="none" stroke="#e88f6a" stroke-width="1" points="836.4,480.8 883.1,533"/>
<!-- columns -->
<rect x="841.3" y="399.8" width="6.4" height="103" fill="#b9b9c8"/>
<rect x="847.7" y="401.4" width="7.3" height="109.5" fill="#aeaebe"/>
<rect x="855.7" y="402.2" width="9.7" height="120.8" fill="#b7b7c6"/>
<rect x="865.4" y="403.9" width="8.4" height="128.7" fill="#aaaaba"/>
<!-- left arch pink strip -->
<polygon fill="#e2c9c8" points="690.7,382 740,376 785.9,373.2 840,375 880,379.5 914.8,384.9 914.8,390.2 880,385.5 840,380.5 785.9,379 740,382 692.2,388.4"/>
<!-- left arch cream -->
<polygon fill="#fffce3" points="692.2,388.4 740,382 785.9,379 840,380.5 880,385.5 914.8,390.2 914.8,553 885.5,553 885.5,406.9 860,402.5 837,399.2 806.4,398.1 760,402 718.6,409.8 723,579.6 674.6,587 683.4,440.6 693.7,440.6"/>
<polygon fill="#e0c7c5" points="670.2,487.4 683.4,483 679,535 674.6,587 673,586"/>
<!-- tower mauve side -->
<polygon fill="#b9a4a7" points="909.7,319.5 916.8,317.5 916.8,452 909.7,452"/>
<!-- tower top face -->
<path fill="#fffce3" d="M916.8,318 Q960,306 1028.5,322.5 L1025.7,324.5 L1025.7,447 L916.8,451 Z"/>
<path fill="none" stroke="#e2c9c8" stroke-width="2" d="M909.5,319.5 Q958,305 1028.5,322"/>
<!-- left pink pillar -->
<polygon fill="#dfc6c4" points="894.1,424.5 915.4,423 915.4,550.4 897,551.8"/>
<rect x="894" y="423" width="2" height="128" fill="#b9a4a7"/>
<!-- lower face -->
<polygon fill="#fffce3" points="916.8,453 1024.3,447 1024.3,534.8 916.8,550.4"/>
<!-- shelf -->
<polygon fill="#8e8b9b" points="916.8,450 1048,443 1052.6,451.5 935,461"/>
<polygon fill="#d9c9cc" points="916.8,449 1048,442 1052.6,446 920,452"/>
<!-- window -->
<polygon fill="#c9b3b6" points="937.8,477.8 1006,473.2 1006,508.5 939.3,515.4"/>
<polygon fill="#1c1c1e" points="939.8,479.8 1004.3,475.6 1004.3,506.5 940.8,513.3"/>
<!-- right pink pillar -->
<polygon fill="#dfc6c4" points="1025.7,418.8 1039.8,418.8 1038.4,530.5 1024.3,532"/>
<!-- copper floor front -->
<polygon fill="#7b4a3f" points="897,551.8 1038.4,530.5 1071,549 919.6,578.6"/>
<polyline fill="none" stroke="#f29b76" stroke-width="1.6" points="897.5,553 919.6,578 1071,548.5"/>
<!-- right arch -->
<polygon fill="#e2c9c8" points="1025.3,383.4 1060,378.5 1093.8,377.2 1125,379.5 1150,385.1 1150,390 1125,385 1093.8,382.5 1060,384 1025.3,389.5"/>
<polygon fill="#fffce3" points="1025.3,389.5 1060,384 1093.8,382.5 1125,385 1147.3,390 1146.5,422 1150,422 1151.7,514.2 1134.2,516 1135,402.7 1127.1,401.8 1115,398.8 1100,396.8 1076,396.5 1057,399.5 1042,404.5 1042,530 1039,530 1039.8,418.8 1025.3,418.8"/>
<polygon fill="#bfb6a3" points="1125.4,402.7 1135,402.7 1134.2,516 1125.4,514"/>
<polygon fill="#e0c7c5" points="1150,450 1155.3,451 1152.6,513.4 1150,513.4"/>
<polygon fill="#8e8b9b" points="1025.3,367.6 1050.7,369.3 1050,372 1025.3,371.5"/>
<polygon fill="#8e8b9b" points="1025.3,444.9 1052.5,452.8 1025.3,452"/>
</svg>

<div class="a" style="left:367.0px;top:183.0px;width:54.0px;height:178.0px;background:#0b0f15;border-radius:5px"></div>
<div class="a" style="left:384.0px;top:190.0px;width:20.0px;height:1.0px;background:#8a8a8a;"></div>
<div class="a" style="left:384.0px;top:194.0px;width:20.0px;height:1.0px;background:#8a8a8a;"></div>
<div class="a" style="left:371.0px;top:203.0px;width:46.0px;height:25.0px;background:#585858;border-radius:4px 4px 0 0"></div>
<div class="a" style="left:371.0px;top:229.0px;width:46.0px;height:25.0px;background:#46607d;border-radius:0"></div>
<div class="a" style="left:371.0px;top:255.0px;width:46.0px;height:25.0px;background:#585858;border-radius:0"></div>
<div class="a" style="left:371.0px;top:281.0px;width:46.0px;height:25.0px;background:#585858;border-radius:0"></div>
<div class="a" style="left:371.0px;top:307.0px;width:46.0px;height:25.0px;background:#585858;border-radius:0"></div>
<div class="a" style="left:371.0px;top:333.0px;width:46.0px;height:25.0px;background:#585858;border-radius:0 0 4px 4px"></div>
<svg class="a" style="left:384.0px;top:204.0px;" width="20" height="21" viewBox="0 0 20 21"><g fill="#c8c8c8"><rect x="5.2" y="2" width="2.4" height="11" rx="1.2"/><rect x="8.4" y="1" width="2.4" height="12" rx="1.2"/><rect x="11.6" y="2" width="2.4" height="11" rx="1.2"/><rect x="13.8" y="4" width="2.4" height="10" rx="1.2" transform="rotate(18 15 9)"/><rect x="1.5" y="8" width="2.4" height="8" rx="1.2" transform="rotate(-50 2.7 12)"/><path d="M4.5,10 H16.2 L14.5,16 L13,20 H7.5 L4,14 Z"/></g></svg>
<svg class="a" style="left:383.0px;top:230.0px;" width="22" height="22" viewBox="0 0 22 22"><path d="M11,1.5 V8.5 M11,13.5 V20.5 M1.5,11 H8.5 M13.5,11 H20.5" stroke="#ececec" stroke-width="1.3"/><path d="M8.6,4 L11,1.6 L13.4,4 M8.6,18 L11,20.4 L13.4,18 M4,8.6 L1.6,11 L4,13.4 M18,8.6 L20.4,11 L18,13.4" fill="none" stroke="#ececec" stroke-width="1.3"/></svg>
<svg class="a" style="left:384.0px;top:257.0px;" width="20" height="20" viewBox="0 0 20 20"><path d="M7,2.5 A8,8 0 0 0 6,17.5 M13,17.5 A8,8 0 0 0 14,2.5" fill="none" stroke="#c8c8c8" stroke-width="1.2"/><path d="M3,17.5 H7 V14 M17,2.5 H13 V6" fill="none" stroke="#c8c8c8" stroke-width="1.2"/></svg>
<svg class="a" style="left:385.0px;top:284.0px;" width="18" height="18" viewBox="0 0 18 18"><rect x="0.5" y="0.5" width="17" height="17" rx="1.5" fill="none" stroke="#c8c8c8" stroke-width="1"/><path d="M0.5,11.5 H6.5 V17.5" fill="none" stroke="#c8c8c8" stroke-width="1"/><path d="M8,10 L14,4 M10,4 H14 V8" fill="none" stroke="#c8c8c8" stroke-width="1.2"/></svg>
<svg class="a" style="left:385.0px;top:310.0px;" width="18" height="18" viewBox="0 0 18 18"><rect x="0" y="0" width="4" height="4" fill="#c8c8c8"/><rect x="14" y="0" width="4" height="4" fill="#c8c8c8"/><rect x="0" y="14" width="4" height="4" fill="#c8c8c8"/><rect x="14" y="14" width="4" height="4" fill="#c8c8c8"/><path d="M6,2 H12 M6,16 H12 M2,6 V12 M16,6 V12" stroke="#c8c8c8" stroke-width="1.2"/></svg>
<svg class="a" style="left:383.0px;top:335.0px;" width="22" height="22" viewBox="0 0 22 22"><circle cx="11" cy="11" r="8" fill="none" stroke="#c8c8c8" stroke-width="1.1" stroke-dasharray="9 3"/><path d="M11,4 V18 M4,11 H18" stroke="#c8c8c8" stroke-width="1.2"/><path d="M9,6 L11,4 L13,6 M9,16 L11,18 L13,16 M6,9 L4,11 L6,13 M16,9 L18,11 L16,13" fill="none" stroke="#c8c8c8" stroke-width="1.2"/><polygon points="0,22 4,22 0,18" fill="#c8c8c8"/><polygon points="22,0 18,0 22,4" fill="#c8c8c8"/></svg>
<div class="a" style="left:839.0px;top:185.0px;width:37.0px;height:38.0px;background:#595959;border-radius:4px;border:1px solid #2b2b2b"></div>
<div class="a" style="left:879.0px;top:185.0px;width:37.0px;height:38.0px;background:#595959;border-radius:4px;border:1px solid #2b2b2b"></div>
<div class="a" style="left:919.0px;top:185.0px;width:37.0px;height:38.0px;background:#595959;border-radius:4px;border:1px solid #2b2b2b"></div>
<div class="a" style="left:959.0px;top:185.0px;width:37.0px;height:38.0px;background:#595959;border-radius:4px;border:1px solid #2b2b2b"></div>
<svg class="a" style="left:845.0px;top:190.0px;" width="28" height="30" viewBox="0 0 28 30"><path d="M2.8,1 V9 M-1,5 H6.6" stroke="#f0553a" stroke-width="1.3" transform="translate(1,0)"/><polygon points="14,4 24,9.5 14,15 4,9.5" fill="#a9c4de"/><polygon points="4,9.5 14,15 14,28 4,22.5" fill="#8da3b8"/><polygon points="14,15 24,9.5 24,22.5 14,28" fill="#6a7886"/><polygon points="14,4 24,9.8 24,22.5 14,28 4,22.5 4,9.8" fill="none" stroke="#f0553a" stroke-width="1"/></svg>
<svg class="a" style="left:882.0px;top:190.0px;" width="30" height="30" viewBox="0 0 30 30"><g transform="translate(15,14.5)"><rect x="-3.2" y="-15" width="6.4" height="7" fill="#f0553a" transform="rotate(0)"/><rect x="-3.2" y="-15" width="6.4" height="7" fill="#f0553a" transform="rotate(45)"/><rect x="-3.2" y="-15" width="6.4" height="7" fill="#f0553a" transform="rotate(90)"/><rect x="-3.2" y="-15" width="6.4" height="7" fill="#f0553a" transform="rotate(135)"/><rect x="-3.2" y="-15" width="6.4" height="7" fill="#f0553a" transform="rotate(180)"/><rect x="-3.2" y="-15" width="6.4" height="7" fill="#f0553a" transform="rotate(225)"/><rect x="-3.2" y="-15" width="6.4" height="7" fill="#f0553a" transform="rotate(270)"/><rect x="-3.2" y="-15" width="6.4" height="7" fill="#f0553a" transform="rotate(315)"/><circle r="9.6" fill="none" stroke="#f0553a" stroke-width="5"/></g></svg>
<svg class="a" style="left:923.0px;top:189.0px;" width="30" height="32" viewBox="0 0 30 32"><g stroke="#f0553a" stroke-width="1.2"><path d="M14,0 V31"/><path d="M0.5,7 L27.5,24 M27.5,7 L0.5,24"/></g><circle cx="14" cy="15.5" r="3" fill="#f0553a"/></svg>
<svg class="a" style="left:962.0px;top:190.0px;" width="30" height="30" viewBox="0 0 30 30"><path d="M20.5,9 A10,10 0 1 0 20.5,21" fill="none" stroke="#f0553a" stroke-width="5"/><polygon points="13,12 27.5,4 27.5,19" fill="#f0553a"/></svg>
<div class="a" style="left:1335.0px;top:190.5px;width:20.0px;height:1.0px;background:#6c7a89;"></div>
<div class="a" style="left:1335.0px;top:194.0px;width:20.0px;height:1.0px;background:#6c7a89;"></div>
<svg class="a" style="left:1360.0px;top:196.0px;" width="80" height="90" viewBox="0 0 80 90">
<text x="32.9" y="9.8" font-family="Liberation Sans" font-size="14" fill="#e8e8e8" text-anchor="middle">y</text>
<polygon points="27,14 42,14 35,38" fill="#80dc3c"/><polygon points="37,14 42,14 35,38" fill="#62b82a"/>
<polygon points="-1,42 24,50 -1,58.5" fill="#c4c6cb"/><polygon points="-1,53 24,50 -1,58.5" fill="#8e8f93"/>
<polygon points="68.5,42 46,49.5 68.5,56" fill="#3a80ee"/><polygon points="68.5,52 46,49.5 68.5,56" fill="#2a5fc0"/>
<text x="70" y="52" font-family="Liberation Sans" font-size="14" fill="#e8e8e8">z</text>
<polygon points="27,84 42,84 35,61" fill="#cfd1d6"/><polygon points="38,84 42,84 35,61" fill="#a8aab0"/>
<rect x="27.5" y="41.5" width="17" height="17" fill="#dcdee4"/><rect x="27.5" y="41.5" width="2" height="17" fill="#9a9ca2"/>
<rect x="72" y="10" width="6" height="5" fill="#9ea3a8"/><path d="M73,10 V8.5 a2,2 0 0 1 4,0" fill="none" stroke="#9ea3a8" stroke-width="1"/>
</svg>
<svg class="a" style="left:1363.5px;top:301.8px;" width="14" height="13" viewBox="0 0 14 13"><path d="M13.5,0.5 L0.8,6.6 L13.5,12.7 M0.8,6.6 H13.5" fill="none" stroke="#b9bdc4" stroke-width="1.1"/></svg>
<div class="t" style="left:1380.0px;top:301.1px;font-size:15.50px;line-height:15.50px;color:#c4c6ca;font-weight:400;letter-spacing:0.00px;">Persp</div>
<div class="a" style="left:1467.0px;top:92.0px;width:453.0px;height:24.0px;background:#282828;border-radius:5px 5px 0 0"></div>
<div class="a" style="left:1467.0px;top:92.0px;width:118.0px;height:25.0px;background:#3c3c3c;border-radius:5px 5px 0 0"></div>
<div class="a" style="left:1467.0px;top:116.0px;width:453.0px;height:877.0px;background:#383838;"></div>
<svg class="a" style="left:1479.0px;top:98.0px;" width="13" height="13" viewBox="0 0 13 13"><circle cx="6.5" cy="6.5" r="6.3" fill="#c4c4c4"/><rect x="5.4" y="5.5" width="2.2" height="5" fill="#3c3c3c"/><circle cx="6.5" cy="3.4" r="1.2" fill="#3c3c3c"/></svg>
<div class="t" style="left:1496.5px;top:96.5px;font-size:16.00px;line-height:16.00px;color:#c4c4c4;font-weight:400;letter-spacing:0.10px;">Inspector</div>
<div class="t" style="left:1594.8px;top:96.5px;font-size:16.00px;line-height:16.00px;color:#c4c4c4;font-weight:400;letter-spacing:-0.15px;">Prefab Brush+</div>
<svg class="a" style="left:1876.0px;top:97.0px;" width="10" height="11" viewBox="0 0 10 11"><path d="M2.5,5 V3.2 a2.6,2.6 0 0 1 5.2,0 V4" fill="none" stroke="#c4c4c4" stroke-width="1.2"/><rect x="0.6" y="5.6" width="8.8" height="4.8" fill="none" stroke="#c4c4c4" stroke-width="1.2"/></svg>
<svg class="a" style="left:1900.0px;top:97.0px;" width="4" height="13" viewBox="0 0 4 13"><circle cx="2" cy="1.8" r="1.5" fill="#c4c4c4"/><circle cx="2" cy="6.5" r="1.5" fill="#c4c4c4"/><circle cx="2" cy="11.2" r="1.5" fill="#c4c4c4"/></svg>
<div class="a" style="left:0.0px;top:647.0px;width:1466.0px;height:24.0px;background:#282828;border-radius:5px 5px 0 0"></div>
<div class="a" style="left:0.0px;top:647.0px;width:102.0px;height:25.0px;background:#3c3c3c;border-radius:5px 5px 0 0"></div>
<div class="a" style="left:0.0px;top:671.0px;width:1466.0px;height:25.0px;background:#3c3c3c;"></div>
<svg class="a" style="left:9.0px;top:654.0px;" width="15" height="13" viewBox="0 0 15 13"><path d="M0,0 H5 L7,2 H15 V13 H0 Z" fill="#c4c4c4"/></svg>
<div class="t" style="left:27.8px;top:651.5px;font-size:16.00px;line-height:16.00px;color:#c4c4c4;font-weight:400;letter-spacing:0.00px;">Project</div>
<svg class="a" style="left:114.0px;top:653.0px;" width="13" height="14" viewBox="0 0 13 14"><rect x="0.7" y="0.7" width="11.6" height="12.6" fill="none" stroke="#c4c4c4" stroke-width="1.4"/><path d="M3,4 H10 M3,7 H10 M3,10 H10" stroke="#c4c4c4" stroke-width="1.3"/></svg>
<div class="t" style="left:132.0px;top:651.5px;font-size:16.00px;line-height:16.00px;color:#c4c4c4;font-weight:400;letter-spacing:0.00px;">Console</div>
<svg class="a" style="left:1421.0px;top:651.0px;" width="11" height="12" viewBox="0 0 11 12"><path d="M2.5,5 V3.2 a2.6,2.6 0 0 1 5.2,0 V4" fill="none" stroke="#c4c4c4" stroke-width="1.2"/><rect x="0.6" y="5.6" width="8.8" height="5.4" fill="none" stroke="#c4c4c4" stroke-width="1.2"/></svg>
<svg class="a" style="left:1446.0px;top:652.0px;" width="4" height="13" viewBox="0 0 4 13"><circle cx="2" cy="1.8" r="1.5" fill="#c4c4c4"/><circle cx="2" cy="6.5" r="1.5" fill="#c4c4c4"/><circle cx="2" cy="11.2" r="1.5" fill="#c4c4c4"/></svg>
<svg class="a" style="left:8.0px;top:676.0px;" width="16" height="16" viewBox="0 0 16 16"><path d="M8,0 V16 M0,8 H16" stroke="#c4c4c4" stroke-width="1.6"/></svg>
<svg class="a" style="left:28.5px;top:681.0px;" width="9" height="5" viewBox="0 0 9 5"><polygon points="0,0 9.0,0 4.5,5.0" fill="#c4c4c4"/></svg>
<div class="a" style="left:916.0px;top:674.0px;width:397.0px;height:20.0px;background:#2a2a2a;border-radius:4px;border:1px solid #232323"></div>
<svg class="a" style="left:920.0px;top:678.0px;" width="11" height="11" viewBox="0 0 11 11"><circle cx="4" cy="4" r="2.8" fill="none" stroke="#c4c4c4" stroke-width="1.3"/><path d="M6,6 L9,9" stroke="#c4c4c4" stroke-width="1.8"/></svg>
<div class="a" style="left:1291.0px;top:675.0px;width:21.0px;height:18.0px;background:#383838;border-radius:0 3px 3px 0"></div>
<svg class="a" style="left:1294.0px;top:676.0px;" width="15" height="15" viewBox="0 0 15 15"><rect x="4.5" y="0.5" width="10" height="10" rx="1" fill="none" stroke="#9a9a9a"/><rect x="0.5" y="9" width="5.5" height="5.5" fill="#383838" stroke="#9a9a9a"/><path d="M7,8 L12,3 M8.5,3 H12 V6.5" fill="none" stroke="#9a9a9a" stroke-width="1"/></svg>
<div class="a" style="left:1316.5px;top:671.0px;width:1.0px;height:25.0px;background:#2a2a2a;"></div>
<div class="a" style="left:1349.5px;top:671.0px;width:1.0px;height:25.0px;background:#2a2a2a;"></div>
<div class="a" style="left:1382.5px;top:671.0px;width:1.0px;height:25.0px;background:#2a2a2a;"></div>
<div class="a" style="left:1415.0px;top:671.0px;width:1.0px;height:25.0px;background:#2a2a2a;"></div>
<svg class="a" style="left:1325.0px;top:675.0px;" width="15" height="17" viewBox="0 0 15 17"><rect x="0" y="0" width="6.5" height="6.5" fill="#c4c4c4"/><circle cx="3.3" cy="12" r="3.5" fill="#c4c4c4"/><polygon points="8,7 11,1 14,7" fill="#c4c4c4"/></svg>
<svg class="a" style="left:1356.0px;top:675.0px;" width="16" height="16" viewBox="0 0 16 16"><path d="M8,0.5 H15.5 V8 L8,15.5 L0.5,8 Z" fill="#c4c4c4"/><circle cx="12" cy="4" r="1.3" fill="#3c3c3c"/></svg>
<svg class="a" style="left:1389.0px;top:676.0px;" width="16" height="15" viewBox="0 0 16 15"><polygon points="8,0 10.2,5.3 16,5.6 11.5,9.4 13,15 8,11.8 3,15 4.5,9.4 0,5.6 5.8,5.3" fill="#8a8a8a"/></svg>
<svg class="a" style="left:1421.0px;top:675.0px;" width="20" height="16" viewBox="0 0 20 16"><path d="M1,8 Q10,0 19,8 Q10,16 1,8 Z" fill="none" stroke="#c4c4c4" stroke-width="1.6"/><circle cx="10" cy="8" r="2.5" fill="#c4c4c4"/><path d="M2,15 L17,1" stroke="#c4c4c4" stroke-width="1.6"/></svg>
<div class="t" style="left:1439.5px;top:676.5px;font-size:16.00px;line-height:16.00px;color:#c4c4c4;font-weight:400;letter-spacing:0.00px;">16</div>
<div class="a" style="left:0.0px;top:696.0px;width:1466.0px;height:1.0px;background:#232323;"></div>
<div class="a" style="left:0.0px;top:697.0px;width:242.0px;height:296.0px;background:#383838;"></div>
<div class="a" style="left:242.0px;top:697.0px;width:17.0px;height:296.0px;background:#343434;"></div>
<div class="a" style="left:259.0px;top:697.0px;width:1.0px;height:296.0px;background:#232323;"></div>
<div class="a" style="left:0.0px;top:809.0px;width:242.0px;height:20.0px;background:#4d4d4d;"></div>
<svg class="a" style="left:246.0px;top:705.5px;" width="9" height="5" viewBox="0 0 9 5"><polygon points="0,5.0 9.0,5.0 4.5,0" fill="#c4c4c4"/></svg>
<svg class="a" style="left:246.0px;top:980.5px;" width="9" height="5" viewBox="0 0 9 5"><polygon points="0,0 9.0,0 4.5,5.0" fill="#c4c4c4"/></svg>
<div class="a" style="left:245.0px;top:787.0px;width:13.0px;height:186.0px;background:#5e5e5e;border-radius:6.5px"></div>
<div class="a" style="left:0;top:697px;width:242px;height:296px;overflow:hidden">
<svg class="a" style="left:24.0px;top:-3.0px" width="9" height="10" viewBox="0 0 9 10"><polygon points="0,0 8.5,5 0,10" fill="#7c7c7c"/></svg>
<svg class="a" style="left:40.0px;top:-4.0px" width="15" height="12" viewBox="0 0 15 12"><path d="M0,0 H5 L7,2 H14.5 V12 H0 Z" fill="#c4c4c4"/></svg>
<div class="t" style="left:60.0px;top:-6.5px;font-size:16.00px;line-height:16.00px;color:#c4c4c4;font-weight:400;letter-spacing:0.20px;">1 - 3D Model Asset</div>
<svg class="a" style="left:24.0px;top:17.0px" width="9" height="10" viewBox="0 0 9 10"><polygon points="0,0 8.5,5 0,10" fill="#7c7c7c"/></svg>
<svg class="a" style="left:40.0px;top:16.0px" width="15" height="12" viewBox="0 0 15 12"><path d="M0,0 H5 L7,2 H14.5 V12 H0 Z" fill="#c4c4c4"/></svg>
<div class="t" style="left:60.0px;top:13.5px;font-size:16.00px;line-height:16.00px;color:#c4c4c4;font-weight:400;letter-spacing:0.20px;">2 - Materials</div>
<svg class="a" style="left:23.0px;top:38.0px" width="10" height="9" viewBox="0 0 10 9"><polygon points="0,0 10,0 5,8.5" fill="#7c7c7c"/></svg>
<svg class="a" style="left:40.0px;top:36.0px" width="16" height="12" viewBox="0 0 16 12"><path d="M0,0 H5 L7,2 H13 V4 H3 L0,11 Z" fill="#c4c4c4"/><polygon points="3.5,5 16,5 13,12 0,12" fill="#c4c4c4"/></svg>
<div class="t" style="left:60.0px;top:33.5px;font-size:16.00px;line-height:16.00px;color:#c4c4c4;font-weight:400;letter-spacing:0.20px;">3 - Atan</div>
<svg class="a" style="left:57.5px;top:56.0px" width="15" height="12" viewBox="0 0 15 12"><path d="M0,0 H5 L7,2 H14.5 V12 H0 Z" fill="#c4c4c4"/></svg>
<div class="t" style="left:77.0px;top:53.5px;font-size:16.00px;line-height:16.00px;color:#c4c4c4;font-weight:400;letter-spacing:0.20px;">6 - Scene</div>
<svg class="a" style="left:57.5px;top:76.0px" width="15" height="12" viewBox="0 0 15 12"><path d="M0,0 H5 L7,2 H14.5 V12 H0 Z" fill="#c4c4c4"/></svg>
<div class="t" style="left:77.0px;top:73.5px;font-size:16.00px;line-height:16.00px;color:#c4c4c4;font-weight:400;letter-spacing:0.20px;">Material</div>
<svg class="a" style="left:41.0px;top:97.0px" width="9" height="10" viewBox="0 0 9 10"><polygon points="0,0 8.5,5 0,10" fill="#7c7c7c"/></svg>
<svg class="a" style="left:57.5px;top:96.0px" width="15" height="12" viewBox="0 0 15 12"><path d="M0,0 H5 L7,2 H14.5 V12 H0 Z" fill="#c4c4c4"/></svg>
<div class="t" style="left:77.0px;top:93.5px;font-size:16.00px;line-height:16.00px;color:#c4c4c4;font-weight:400;letter-spacing:0.20px;">Scriptable ObJects</div>
<svg class="a" style="left:40.0px;top:116.0px" width="15" height="12" viewBox="0 0 15 12"><path d="M0,0 H5 L7,2 H14.5 V12 H0 Z" fill="#c4c4c4"/></svg>
<div class="t" style="left:60.0px;top:113.5px;font-size:16.00px;line-height:16.00px;color:#c4c4c4;font-weight:400;letter-spacing:0.20px;">Bangunan Politeknik</div>
<svg class="a" style="left:24.0px;top:137.0px" width="9" height="10" viewBox="0 0 9 10"><polygon points="0,0 8.5,5 0,10" fill="#7c7c7c"/></svg>
<svg class="a" style="left:40.0px;top:136.0px" width="15" height="12" viewBox="0 0 15 12"><path d="M0,0 H5 L7,2 H14.5 V12 H0 Z" fill="#c4c4c4"/></svg>
<div class="t" style="left:60.0px;top:133.5px;font-size:16.00px;line-height:16.00px;color:#c4c4c4;font-weight:400;letter-spacing:0.20px;">Easy Character Movement</div>
<svg class="a" style="left:24.0px;top:157.0px" width="9" height="10" viewBox="0 0 9 10"><polygon points="0,0 8.5,5 0,10" fill="#7c7c7c"/></svg>
<svg class="a" style="left:40.0px;top:156.0px" width="15" height="12" viewBox="0 0 15 12"><path d="M0,0 H5 L7,2 H14.5 V12 H0 Z" fill="#c4c4c4"/></svg>
<div class="t" style="left:60.0px;top:153.5px;font-size:16.00px;line-height:16.00px;color:#c4c4c4;font-weight:400;letter-spacing:0.20px;">Low Poly Vegetation Pack</div>
<svg class="a" style="left:24.0px;top:177.0px" width="9" height="10" viewBox="0 0 9 10"><polygon points="0,0 8.5,5 0,10" fill="#7c7c7c"/></svg>
<svg class="a" style="left:40.0px;top:176.0px" width="15" height="12" viewBox="0 0 15 12"><path d="M0,0 H5 L7,2 H14.5 V12 H0 Z" fill="#c4c4c4"/></svg>
<div class="t" style="left:60.0px;top:173.5px;font-size:16.00px;line-height:16.00px;color:#c4c4c4;font-weight:400;letter-spacing:0.20px;">MT Assets</div>
<svg class="a" style="left:24.0px;top:197.0px" width="9" height="10" viewBox="0 0 9 10"><polygon points="0,0 8.5,5 0,10" fill="#7c7c7c"/></svg>
<svg class="a" style="left:40.0px;top:196.0px" width="15" height="12" viewBox="0 0 15 12"><path d="M0,0 H5 L7,2 H14.5 V12 H0 Z" fill="#c4c4c4"/></svg>
<div class="t" style="left:60.0px;top:193.5px;font-size:16.00px;line-height:16.00px;color:#c4c4c4;font-weight:400;letter-spacing:0.20px;">Plugins</div>
<svg class="a" style="left:24.0px;top:217.0px" width="9" height="10" viewBox="0 0 9 10"><polygon points="0,0 8.5,5 0,10" fill="#7c7c7c"/></svg>
<svg class="a" style="left:40.0px;top:216.0px" width="15" height="12" viewBox="0 0 15 12"><path d="M0,0 H5 L7,2 H14.5 V12 H0 Z" fill="#c4c4c4"/></svg>
<div class="t" style="left:60.0px;top:213.5px;font-size:16.00px;line-height:16.00px;color:#c4c4c4;font-weight:400;letter-spacing:0.20px;">Prefab Brush</div>
<svg class="a" style="left:40.0px;top:236.0px" width="15" height="12" viewBox="0 0 15 12"><path d="M0,0 H5 L7,2 H14.5 V12 H0 Z" fill="#c4c4c4"/></svg>
<div class="t" style="left:60.0px;top:233.5px;font-size:16.00px;line-height:16.00px;color:#c4c4c4;font-weight:400;letter-spacing:0.20px;">Scenes</div>
<svg class="a" style="left:24.0px;top:257.0px" width="9" height="10" viewBox="0 0 9 10"><polygon points="0,0 8.5,5 0,10" fill="#7c7c7c"/></svg>
<svg class="a" style="left:40.0px;top:256.0px" width="15" height="12" viewBox="0 0 15 12"><path d="M0,0 H5 L7,2 H14.5 V12 H0 Z" fill="#c4c4c4"/></svg>
<div class="t" style="left:60.0px;top:253.5px;font-size:16.00px;line-height:16.00px;color:#c4c4c4;font-weight:400;letter-spacing:0.20px;">tripolygon</div>
</div>
<svg class="a" style="left:7.0px;top:973.7px;" width="9" height="10" viewBox="0 0 9 10"><polygon points="0,0 8.5,5 0,10" fill="#7c7c7c"/></svg>
<svg class="a" style="left:23.0px;top:972.7px;" width="15" height="12" viewBox="0 0 15 12"><path d="M0,0 H5 L7,2 H14.5 V12 H0 Z" fill="#c4c4c4"/></svg>
<div class="t" style="left:43.8px;top:970.7px;font-size:16.00px;line-height:16.00px;color:#c8c8c8;font-weight:700;letter-spacing:-0.20px;">Packages</div>
<div class="a" style="left:260.0px;top:697.0px;width:1206.0px;height:25.0px;background:#3c3c3c;"></div>
<div class="a" style="left:260.0px;top:722.0px;width:1206.0px;height:1.0px;background:#232323;"></div>
<div class="a" style="left:260.0px;top:723.0px;width:1206.0px;height:245.0px;background:#333333;"></div>
<div class="a" style="left:260.0px;top:968.0px;width:1206.0px;height:25.0px;background:#3c3c3c;"></div>
<div class="t" style="left:264.5px;top:701.5px;font-size:16.00px;line-height:16.00px;color:#b8b8b8;font-weight:400;letter-spacing:0.00px;">Assets</div>
<svg class="a" style="left:319.0px;top:704.0px;" width="7" height="12" viewBox="0 0 7 12"><path d="M1,1 L6,6 L1,11" fill="none" stroke="#9a9a9a" stroke-width="1.4"/></svg>
<div class="t" style="left:334.5px;top:701.5px;font-size:16.00px;line-height:16.00px;color:#c8c8c8;font-weight:700;letter-spacing:-0.40px;">Bangunan Politeknik</div>
<svg class="a" style="left:285.0px;top:741.3px;" width="65" height="70" viewBox="0 0 65 70"><g transform="scale(0.99,0.993)"><polygon points="32.5,0 62,15 32.5,30 3,15" fill="#80d4f9"/><polygon points="0,19 30,34 30,70 0,55" fill="#80d4f9"/><polygon points="35,34 65,19 65,55 35,70" fill="#80d4f9"/></g></svg>
<div class="t" style="left:258.7px;top:819.8px;width:120px;text-align:center;font-size:13px;line-height:14px;color:#c8c8c8;letter-spacing:0.25px">0 - Pintu G...</div>
<svg class="a" style="left:382.0px;top:741.3px;" width="65" height="70" viewBox="0 0 65 70"><g transform="scale(0.99,0.993)"><polygon points="32.5,0 62,15 32.5,30 3,15" fill="#80d4f9"/><polygon points="0,19 30,34 30,70 0,55" fill="#80d4f9"/><polygon points="35,34 65,19 65,55 35,70" fill="#80d4f9"/></g></svg>
<div class="t" style="left:355.7px;top:819.8px;width:120px;text-align:center;font-size:13px;line-height:14px;color:#c8c8c8;letter-spacing:0.25px">1 - Pusat Is...</div>
<svg class="a" style="left:478.9px;top:741.3px;" width="65" height="70" viewBox="0 0 65 70"><g transform="scale(0.99,0.993)"><polygon points="32.5,0 62,15 32.5,30 3,15" fill="#80d4f9"/><polygon points="0,19 30,34 30,70 0,55" fill="#80d4f9"/><polygon points="35,34 65,19 65,55 35,70" fill="#80d4f9"/></g></svg>
<div class="t" style="left:452.6px;top:819.8px;width:120px;text-align:center;font-size:13px;line-height:14px;color:#c8c8c8;letter-spacing:0.25px">2 - Anjung...</div>
<svg class="a" style="left:575.9px;top:741.3px;" width="65" height="70" viewBox="0 0 65 70"><g transform="scale(0.99,0.993)"><polygon points="32.5,0 62,15 32.5,30 3,15" fill="#80d4f9"/><polygon points="0,19 30,34 30,70 0,55" fill="#80d4f9"/><polygon points="35,34 65,19 65,55 35,70" fill="#80d4f9"/></g></svg>
<div class="t" style="left:549.6px;top:819.8px;width:120px;text-align:center;font-size:13px;line-height:14px;color:#c8c8c8;letter-spacing:0.25px">3 - CISEC</div>
<svg class="a" style="left:672.9px;top:741.3px;" width="65" height="70" viewBox="0 0 65 70"><g transform="scale(0.99,0.993)"><polygon points="32.5,0 62,15 32.5,30 3,15" fill="#80d4f9"/><polygon points="0,19 30,34 30,70 0,55" fill="#80d4f9"/><polygon points="35,34 65,19 65,55 35,70" fill="#80d4f9"/></g></svg>
<div class="t" style="left:646.6px;top:819.8px;width:120px;text-align:center;font-size:13px;line-height:14px;color:#c8c8c8;letter-spacing:0.25px">4 - Dewan ...</div>
<svg class="a" style="left:769.8px;top:741.3px;" width="65" height="70" viewBox="0 0 65 70"><g transform="scale(0.99,0.993)"><polygon points="32.5,0 62,15 32.5,30 3,15" fill="#80d4f9"/><polygon points="0,19 30,34 30,70 0,55" fill="#80d4f9"/><polygon points="35,34 65,19 65,55 35,70" fill="#80d4f9"/></g></svg>
<div class="t" style="left:743.5px;top:819.8px;width:120px;text-align:center;font-size:13px;line-height:14px;color:#c8c8c8;letter-spacing:0.25px">5 - Bangu...</div>
<svg class="a" style="left:866.8px;top:741.3px;" width="65" height="70" viewBox="0 0 65 70"><g transform="scale(0.99,0.993)"><polygon points="32.5,0 62,15 32.5,30 3,15" fill="#80d4f9"/><polygon points="0,19 30,34 30,70 0,55" fill="#80d4f9"/><polygon points="35,34 65,19 65,55 35,70" fill="#80d4f9"/></g></svg>
<div class="t" style="left:840.5px;top:819.8px;width:120px;text-align:center;font-size:13px;line-height:14px;color:#c8c8c8;letter-spacing:0.25px">5 - Pintu G...</div>
<svg class="a" style="left:963.8px;top:741.3px;" width="65" height="70" viewBox="0 0 65 70"><g transform="scale(0.99,0.993)"><polygon points="32.5,0 62,15 32.5,30 3,15" fill="#80d4f9"/><polygon points="0,19 30,34 30,70 0,55" fill="#80d4f9"/><polygon points="35,34 65,19 65,55 35,70" fill="#80d4f9"/></g></svg>
<div class="t" style="left:937.5px;top:819.8px;width:120px;text-align:center;font-size:13px;line-height:14px;color:#c8c8c8;letter-spacing:0.25px">6 - JKM &amp; ...</div>
<svg class="a" style="left:1060.8px;top:741.3px;" width="65" height="70" viewBox="0 0 65 70"><g transform="scale(0.99,0.993)"><polygon points="32.5,0 62,15 32.5,30 3,15" fill="#80d4f9"/><polygon points="0,19 30,34 30,70 0,55" fill="#80d4f9"/><polygon points="35,34 65,19 65,55 35,70" fill="#80d4f9"/></g></svg>
<div class="t" style="left:1034.5px;top:819.8px;width:120px;text-align:center;font-size:13px;line-height:14px;color:#c8c8c8;letter-spacing:0.25px">7 - PEJAB...</div>
<svg class="a" style="left:1157.7px;top:741.3px;" width="65" height="70" viewBox="0 0 65 70"><g transform="scale(0.99,0.993)"><polygon points="32.5,0 62,15 32.5,30 3,15" fill="#80d4f9"/><polygon points="0,19 30,34 30,70 0,55" fill="#80d4f9"/><polygon points="35,34 65,19 65,55 35,70" fill="#80d4f9"/></g></svg>
<div class="t" style="left:1131.4px;top:819.8px;width:120px;text-align:center;font-size:13px;line-height:14px;color:#c8c8c8;letter-spacing:0.25px">8 - JMSK</div>
<svg class="a" style="left:1254.7px;top:741.3px;" width="65" height="70" viewBox="0 0 65 70"><g transform="scale(0.99,0.993)"><polygon points="32.5,0 62,15 32.5,30 3,15" fill="#80d4f9"/><polygon points="0,19 30,34 30,70 0,55" fill="#80d4f9"/><polygon points="35,34 65,19 65,55 35,70" fill="#80d4f9"/></g></svg>
<div class="t" style="left:1228.4px;top:819.8px;width:120px;text-align:center;font-size:13px;line-height:14px;color:#c8c8c8;letter-spacing:0.25px">9 - DEWAN...</div>
<svg class="a" style="left:1351.7px;top:741.3px;" width="65" height="70" viewBox="0 0 65 70"><g transform="scale(0.99,0.993)"><polygon points="32.5,0 62,15 32.5,30 3,15" fill="#80d4f9"/><polygon points="0,19 30,34 30,70 0,55" fill="#80d4f9"/><polygon points="35,34 65,19 65,55 35,70" fill="#80d4f9"/></g></svg>
<div class="t" style="left:1325.4px;top:819.8px;width:120px;text-align:center;font-size:13px;line-height:14px;color:#c8c8c8;letter-spacing:0.25px">10 - Stude...</div>
<svg class="a" style="left:285.0px;top:858.3px;" width="65" height="70" viewBox="0 0 65 70"><g transform="scale(0.99,0.993)"><polygon points="32.5,0 62,15 32.5,30 3,15" fill="#80d4f9"/><polygon points="0,19 30,34 30,70 0,55" fill="#80d4f9"/><polygon points="35,34 65,19 65,55 35,70" fill="#80d4f9"/></g></svg>
<div class="t" style="left:258.7px;top:936.8px;width:120px;text-align:center;font-size:13px;line-height:14px;color:#c8c8c8;letter-spacing:0.25px">11 - Galeri ...</div>
<svg class="a" style="left:382.0px;top:858.3px;" width="65" height="70" viewBox="0 0 65 70"><g transform="scale(0.99,0.993)"><polygon points="32.5,0 62,15 32.5,30 3,15" fill="#80d4f9"/><polygon points="0,19 30,34 30,70 0,55" fill="#80d4f9"/><polygon points="35,34 65,19 65,55 35,70" fill="#80d4f9"/></g></svg>
<div class="t" style="left:355.7px;top:936.8px;width:120px;text-align:center;font-size:13px;line-height:14px;color:#c8c8c8;letter-spacing:0.25px">12 - FUTS...</div>
<svg class="a" style="left:478.9px;top:858.3px;" width="65" height="70" viewBox="0 0 65 70"><g transform="scale(0.99,0.993)"><polygon points="32.5,0 62,15 32.5,30 3,15" fill="#80d4f9"/><polygon points="0,19 30,34 30,70 0,55" fill="#80d4f9"/><polygon points="35,34 65,19 65,55 35,70" fill="#80d4f9"/></g></svg>
<div class="t" style="left:452.6px;top:936.8px;width:120px;text-align:center;font-size:13px;line-height:14px;color:#c8c8c8;letter-spacing:0.25px">13 - BENG...</div>
<svg class="a" style="left:575.9px;top:858.3px;" width="65" height="70" viewBox="0 0 65 70"><g transform="scale(0.99,0.993)"><polygon points="32.5,0 62,15 32.5,30 3,15" fill="#80d4f9"/><polygon points="0,19 30,34 30,70 0,55" fill="#80d4f9"/><polygon points="35,34 65,19 65,55 35,70" fill="#80d4f9"/></g></svg>
<div class="t" style="left:549.6px;top:936.8px;width:120px;text-align:center;font-size:13px;line-height:14px;color:#c8c8c8;letter-spacing:0.25px">14 - BENG...</div>
<svg class="a" style="left:672.9px;top:858.3px;" width="65" height="70" viewBox="0 0 65 70"><g transform="scale(0.99,0.993)"><polygon points="32.5,0 62,15 32.5,30 3,15" fill="#80d4f9"/><polygon points="0,19 30,34 30,70 0,55" fill="#80d4f9"/><polygon points="35,34 65,19 65,55 35,70" fill="#80d4f9"/></g></svg>
<div class="t" style="left:646.6px;top:936.8px;width:120px;text-align:center;font-size:13px;line-height:14px;color:#c8c8c8;letter-spacing:0.25px">15 - Perpu...</div>
<svg class="a" style="left:769.8px;top:858.3px;" width="65" height="70" viewBox="0 0 65 70"><g transform="scale(0.99,0.993)"><polygon points="32.5,0 62,15 32.5,30 3,15" fill="#80d4f9"/><polygon points="0,19 30,34 30,70 0,55" fill="#80d4f9"/><polygon points="35,34 65,19 65,55 35,70" fill="#80d4f9"/></g></svg>
<div class="t" style="left:743.5px;top:936.8px;width:120px;text-align:center;font-size:13px;line-height:14px;color:#c8c8c8;letter-spacing:0.25px">16 - DEW...</div>
<svg class="a" style="left:866.8px;top:858.3px;" width="65" height="70" viewBox="0 0 65 70"><g transform="scale(0.99,0.993)"><polygon points="32.5,0 62,15 32.5,30 3,15" fill="#80d4f9"/><polygon points="0,19 30,34 30,70 0,55" fill="#80d4f9"/><polygon points="35,34 65,19 65,55 35,70" fill="#80d4f9"/></g></svg>
<div class="t" style="left:840.5px;top:936.8px;width:120px;text-align:center;font-size:13px;line-height:14px;color:#c8c8c8;letter-spacing:0.25px">17 - JMSK ...</div>
<svg class="a" style="left:963.8px;top:858.3px;" width="65" height="70" viewBox="0 0 65 70"><g transform="scale(0.99,0.993)"><polygon points="32.5,0 62,15 32.5,30 3,15" fill="#80d4f9"/><polygon points="0,19 30,34 30,70 0,55" fill="#80d4f9"/><polygon points="35,34 65,19 65,55 35,70" fill="#80d4f9"/></g></svg>
<div class="t" style="left:937.5px;top:936.8px;width:120px;text-align:center;font-size:13px;line-height:14px;color:#c8c8c8;letter-spacing:0.25px">19 - JKP</div>
<svg class="a" style="left:1060.8px;top:858.3px;" width="65" height="70" viewBox="0 0 65 70"><g transform="scale(0.99,0.993)"><polygon points="32.5,0 62,15 32.5,30 3,15" fill="#80d4f9"/><polygon points="0,19 30,34 30,70 0,55" fill="#80d4f9"/><polygon points="35,34 65,19 65,55 35,70" fill="#80d4f9"/></g></svg>
<div class="t" style="left:1034.5px;top:936.8px;width:120px;text-align:center;font-size:13px;line-height:14px;color:#c8c8c8;letter-spacing:0.25px">20 - CAFE ...</div>
<svg class="a" style="left:1157.7px;top:858.3px;" width="65" height="70" viewBox="0 0 65 70"><g transform="scale(0.99,0.993)"><polygon points="32.5,0 62,15 32.5,30 3,15" fill="#80d4f9"/><polygon points="0,19 30,34 30,70 0,55" fill="#80d4f9"/><polygon points="35,34 65,19 65,55 35,70" fill="#80d4f9"/></g></svg>
<div class="t" style="left:1131.4px;top:936.8px;width:120px;text-align:center;font-size:13px;line-height:14px;color:#c8c8c8;letter-spacing:0.25px">21 - JTMK</div>
<svg class="a" style="left:1254.7px;top:858.3px;" width="65" height="70" viewBox="0 0 65 70"><g transform="scale(0.99,0.993)"><polygon points="32.5,0 62,15 32.5,30 3,15" fill="#80d4f9"/><polygon points="0,19 30,34 30,70 0,55" fill="#80d4f9"/><polygon points="35,34 65,19 65,55 35,70" fill="#80d4f9"/></g></svg>
<div class="t" style="left:1228.4px;top:936.8px;width:120px;text-align:center;font-size:13px;line-height:14px;color:#c8c8c8;letter-spacing:0.25px">22 - JKE</div>
<svg class="a" style="left:1351.7px;top:858.3px;" width="65" height="70" viewBox="0 0 65 70"><g transform="scale(0.99,0.993)"><polygon points="32.5,0 62,15 32.5,30 3,15" fill="#80d4f9"/><polygon points="0,19 30,34 30,70 0,55" fill="#80d4f9"/><polygon points="35,34 65,19 65,55 35,70" fill="#80d4f9"/></g></svg>
<div class="t" style="left:1325.4px;top:936.8px;width:120px;text-align:center;font-size:13px;line-height:14px;color:#c8c8c8;letter-spacing:0.25px">CISEC</div>
<div class="a" style="left:1449.0px;top:723.0px;width:16.0px;height:245.0px;background:#333333;"></div>
<svg class="a" style="left:1452.5px;top:730.5px;" width="9" height="5" viewBox="0 0 9 5"><polygon points="0,5.0 9.0,5.0 4.5,0" fill="#c4c4c4"/></svg>
<svg class="a" style="left:1452.5px;top:954.5px;" width="9" height="5" viewBox="0 0 9 5"><polygon points="0,0 9.0,0 4.5,5.0" fill="#c4c4c4"/></svg>
<div class="a" style="left:1451.5px;top:743.0px;width:12.5px;height:147.0px;background:#5e5e5e;border-radius:6px"></div>
<div class="a" style="left:1376.0px;top:979.5px;width:70.0px;height:2.0px;background:#5a5a5a;"></div>
<svg class="a" style="left:1408.0px;top:973.0px;" width="15" height="15" viewBox="0 0 15 15"><circle cx="7.5" cy="7.5" r="7" fill="#9c9c9c"/></svg>
<div class="a" style="left:1466.0px;top:647.0px;width:1.0px;height:346.0px;background:#191919;"></div>
<div class="a" style="left:0.0px;top:993.0px;width:1920.0px;height:27.0px;background:#191919;"></div>
<svg class="a" style="left:3.0px;top:998.0px;" width="17" height="17" viewBox="0 0 17 17"><circle cx="8.5" cy="8" r="7.8" fill="#e8e8e8"/><polygon points="11,13 15.5,11 15.5,17" fill="#e8e8e8"/><rect x="7.3" y="3" width="2.4" height="7" rx="1" fill="#191919"/><circle cx="8.5" cy="12.5" r="1.3" fill="#191919"/></svg>
<div class="t" style="left:24.8px;top:999.5px;font-size:16.00px;line-height:16.00px;color:#c4c4c4;font-weight:400;letter-spacing:0.00px;">13.06875</div>
<div class="a" style="left:1789.5px;top:995.0px;width:1.0px;height:23.0px;background:#2a2a2a;"></div>
<div class="a" style="left:1822.0px;top:995.0px;width:1.0px;height:23.0px;background:#2a2a2a;"></div>
<div class="a" style="left:1854.5px;top:995.0px;width:1.0px;height:23.0px;background:#2a2a2a;"></div>
<div class="a" style="left:1886.5px;top:995.0px;width:1.0px;height:23.0px;background:#2a2a2a;"></div>
<svg class="a" style="left:1797.0px;top:999.0px;" width="16" height="17" viewBox="0 0 16 17"><ellipse cx="8" cy="10" rx="5.5" ry="6.5" fill="#c4c4c4"/><circle cx="8" cy="3.5" r="2.8" fill="#c4c4c4"/><path d="M1,6 L4,8 M15,6 L12,8 M0,11 H3 M16,11 H13 M1,16 L4,14 M15,16 L12,14" stroke="#c4c4c4" stroke-width="1.2"/><path d="M2,1 L15,16" stroke="#191919" stroke-width="2.5"/><path d="M2,1 L15,16" stroke="#c4c4c4" stroke-width="1.2"/></svg>
<svg class="a" style="left:1829.0px;top:999.0px;" width="16" height="17" viewBox="0 0 16 17"><ellipse cx="8" cy="3.5" rx="7" ry="3" fill="#c4c4c4"/><path d="M1,5 V8 a7,3 0 0 0 14,0 V5 a7,3 0 0 1 -14,0 Z M1,9.5 V12.5 a7,3 0 0 0 14,0 V9.5 a7,3 0 0 1 -14,0 Z" fill="#c4c4c4"/><path d="M2,1 L15,16" stroke="#191919" stroke-width="2.5"/><path d="M2,1 L15,16" stroke="#c4c4c4" stroke-width="1.2"/></svg>
<svg class="a" style="left:1861.0px;top:999.0px;" width="17" height="17" viewBox="0 0 17 17"><path d="M3,5 A7,7 0 0 1 14,4 M14,12 A7,7 0 0 1 3,13" fill="none" stroke="#c4c4c4" stroke-width="1.4"/><polygon points="14,1 16,6 11,5" fill="#c4c4c4"/><polygon points="3,16 1,11 6,12" fill="#c4c4c4"/><circle cx="8.5" cy="8.5" r="2.5" fill="#c4c4c4"/><path d="M2,1 L15,16" stroke="#191919" stroke-width="2.5"/><path d="M2,1 L15,16" stroke="#c4c4c4" stroke-width="1.2"/></svg>
<svg class="a" style="left:1893.0px;top:999.0px;" width="17" height="17" viewBox="0 0 17 17"><circle cx="8.5" cy="8.5" r="7.7" fill="none" stroke="#c4c4c4" stroke-width="1.2"/><path d="M5,8.5 L7.5,11 L12,6" fill="none" stroke="#c4c4c4" stroke-width="1.6"/></svg>
<div class="a" style="left:0.0px;top:1020.0px;width:1920.0px;height:5.0px;background:linear-gradient(90deg,#22222c 0%,#26261f 8%,#2a2a1f 25%,#262620 45%,#25232a 75%,#2a2030 100%);"></div>
</body></html>
